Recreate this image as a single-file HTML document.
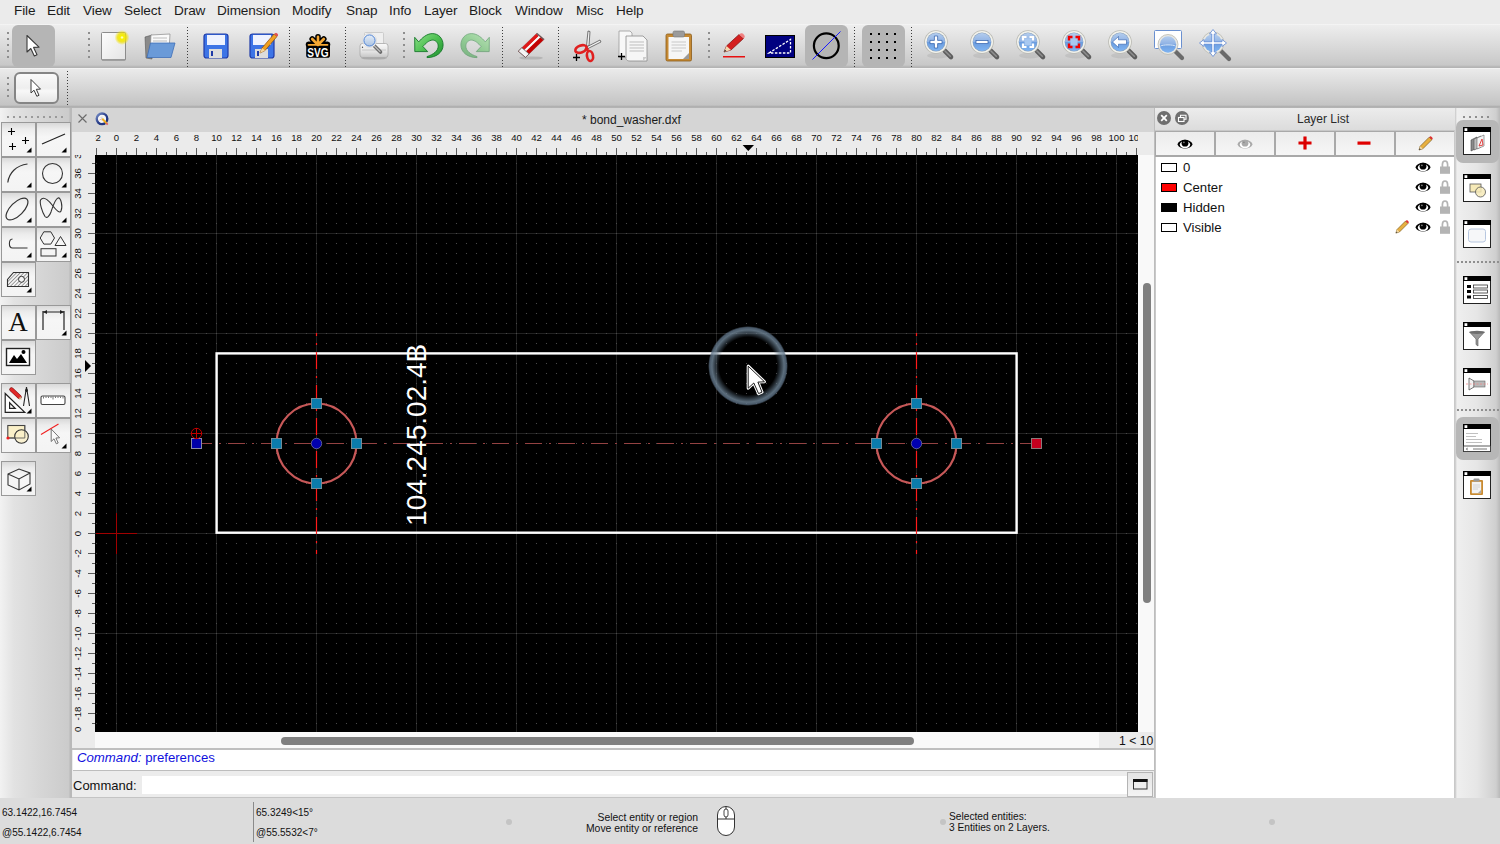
<!DOCTYPE html><html><head><meta charset="utf-8"><style>
*{margin:0;padding:0;box-sizing:border-box}
html,body{width:1500px;height:844px;overflow:hidden;background:#ececec;font-family:"Liberation Sans",sans-serif;color:#1a1a1a}
.ab{position:absolute}
.menu{position:absolute;top:0;left:0;width:1500px;height:24px;background:#ebebeb}
.menu span{position:absolute;top:3px;font-size:13.6px;letter-spacing:-0.1px;color:#1c1c1c;white-space:nowrap}
.tb1{position:absolute;top:24px;left:0;width:1500px;height:44px;background:linear-gradient(#f7f7f7 0px,#ededed 1.5px,#dcdcdc 20px,#c8c8c8 41px,#b4b4b4 43px,#b4b4b4 44px)}
.tb2{position:absolute;top:68px;left:0;width:1500px;height:40px;background:linear-gradient(#f7f7f7 0px,#eaeaea 1.5px,#d8d8d8 18px,#c4c4c4 37px,#b0b0b0 38.5px,#b4b4b4 40px)}
.sepv{position:absolute;width:2px;border-left:2px dotted #8a8a8a}
.ico{position:absolute}
</style></head><body>

<div class="menu">
<span style="left:14px">File</span>
<span style="left:47px">Edit</span>
<span style="left:83px">View</span>
<span style="left:124px">Select</span>
<span style="left:174px">Draw</span>
<span style="left:217px">Dimension</span>
<span style="left:292px">Modify</span>
<span style="left:346px">Snap</span>
<span style="left:389px">Info</span>
<span style="left:424px">Layer</span>
<span style="left:469px">Block</span>
<span style="left:515px">Window</span>
<span style="left:576px">Misc</span>
<span style="left:616px">Help</span>
</div>
<div class="tb1"></div><div class="tb2"></div>
<div class="ab" style="left:7px;top:32px;width:2px;height:2px;background:#8e8e8e"></div><div class="ab" style="left:7px;top:38px;width:2px;height:2px;background:#8e8e8e"></div><div class="ab" style="left:7px;top:44px;width:2px;height:2px;background:#8e8e8e"></div><div class="ab" style="left:7px;top:50px;width:2px;height:2px;background:#8e8e8e"></div><div class="ab" style="left:7px;top:56px;width:2px;height:2px;background:#8e8e8e"></div>
<div class="ab" style="left:88px;top:32px;width:2px;height:2px;background:#8e8e8e"></div><div class="ab" style="left:88px;top:38px;width:2px;height:2px;background:#8e8e8e"></div><div class="ab" style="left:88px;top:44px;width:2px;height:2px;background:#8e8e8e"></div><div class="ab" style="left:88px;top:50px;width:2px;height:2px;background:#8e8e8e"></div><div class="ab" style="left:88px;top:56px;width:2px;height:2px;background:#8e8e8e"></div>
<div class="ab" style="left:403px;top:32px;width:2px;height:2px;background:#8e8e8e"></div><div class="ab" style="left:403px;top:38px;width:2px;height:2px;background:#8e8e8e"></div><div class="ab" style="left:403px;top:44px;width:2px;height:2px;background:#8e8e8e"></div><div class="ab" style="left:403px;top:50px;width:2px;height:2px;background:#8e8e8e"></div><div class="ab" style="left:403px;top:56px;width:2px;height:2px;background:#8e8e8e"></div>
<div class="ab" style="left:708px;top:32px;width:2px;height:2px;background:#8e8e8e"></div><div class="ab" style="left:708px;top:38px;width:2px;height:2px;background:#8e8e8e"></div><div class="ab" style="left:708px;top:44px;width:2px;height:2px;background:#8e8e8e"></div><div class="ab" style="left:708px;top:50px;width:2px;height:2px;background:#8e8e8e"></div><div class="ab" style="left:708px;top:56px;width:2px;height:2px;background:#8e8e8e"></div>
<div class="ab" style="left:7px;top:77px;width:2px;height:2px;background:#8e8e8e"></div><div class="ab" style="left:7px;top:83px;width:2px;height:2px;background:#8e8e8e"></div><div class="ab" style="left:7px;top:89px;width:2px;height:2px;background:#8e8e8e"></div><div class="ab" style="left:7px;top:95px;width:2px;height:2px;background:#8e8e8e"></div>
<div class="ab" style="left:187px;top:27px;width:1px;height:1px;background:#3c3c3c"></div><div class="ab" style="left:187px;top:30px;width:1px;height:1px;background:#3c3c3c"></div><div class="ab" style="left:187px;top:33px;width:1px;height:1px;background:#3c3c3c"></div><div class="ab" style="left:187px;top:36px;width:1px;height:1px;background:#3c3c3c"></div><div class="ab" style="left:187px;top:39px;width:1px;height:1px;background:#3c3c3c"></div><div class="ab" style="left:187px;top:42px;width:1px;height:1px;background:#3c3c3c"></div><div class="ab" style="left:187px;top:45px;width:1px;height:1px;background:#3c3c3c"></div><div class="ab" style="left:187px;top:48px;width:1px;height:1px;background:#3c3c3c"></div><div class="ab" style="left:187px;top:51px;width:1px;height:1px;background:#3c3c3c"></div><div class="ab" style="left:187px;top:54px;width:1px;height:1px;background:#3c3c3c"></div><div class="ab" style="left:187px;top:57px;width:1px;height:1px;background:#3c3c3c"></div><div class="ab" style="left:187px;top:60px;width:1px;height:1px;background:#3c3c3c"></div><div class="ab" style="left:187px;top:63px;width:1px;height:1px;background:#3c3c3c"></div><div class="ab" style="left:187px;top:66px;width:1px;height:1px;background:#3c3c3c"></div>
<div class="ab" style="left:289px;top:27px;width:1px;height:1px;background:#3c3c3c"></div><div class="ab" style="left:289px;top:30px;width:1px;height:1px;background:#3c3c3c"></div><div class="ab" style="left:289px;top:33px;width:1px;height:1px;background:#3c3c3c"></div><div class="ab" style="left:289px;top:36px;width:1px;height:1px;background:#3c3c3c"></div><div class="ab" style="left:289px;top:39px;width:1px;height:1px;background:#3c3c3c"></div><div class="ab" style="left:289px;top:42px;width:1px;height:1px;background:#3c3c3c"></div><div class="ab" style="left:289px;top:45px;width:1px;height:1px;background:#3c3c3c"></div><div class="ab" style="left:289px;top:48px;width:1px;height:1px;background:#3c3c3c"></div><div class="ab" style="left:289px;top:51px;width:1px;height:1px;background:#3c3c3c"></div><div class="ab" style="left:289px;top:54px;width:1px;height:1px;background:#3c3c3c"></div><div class="ab" style="left:289px;top:57px;width:1px;height:1px;background:#3c3c3c"></div><div class="ab" style="left:289px;top:60px;width:1px;height:1px;background:#3c3c3c"></div><div class="ab" style="left:289px;top:63px;width:1px;height:1px;background:#3c3c3c"></div><div class="ab" style="left:289px;top:66px;width:1px;height:1px;background:#3c3c3c"></div>
<div class="ab" style="left:345px;top:27px;width:1px;height:1px;background:#3c3c3c"></div><div class="ab" style="left:345px;top:30px;width:1px;height:1px;background:#3c3c3c"></div><div class="ab" style="left:345px;top:33px;width:1px;height:1px;background:#3c3c3c"></div><div class="ab" style="left:345px;top:36px;width:1px;height:1px;background:#3c3c3c"></div><div class="ab" style="left:345px;top:39px;width:1px;height:1px;background:#3c3c3c"></div><div class="ab" style="left:345px;top:42px;width:1px;height:1px;background:#3c3c3c"></div><div class="ab" style="left:345px;top:45px;width:1px;height:1px;background:#3c3c3c"></div><div class="ab" style="left:345px;top:48px;width:1px;height:1px;background:#3c3c3c"></div><div class="ab" style="left:345px;top:51px;width:1px;height:1px;background:#3c3c3c"></div><div class="ab" style="left:345px;top:54px;width:1px;height:1px;background:#3c3c3c"></div><div class="ab" style="left:345px;top:57px;width:1px;height:1px;background:#3c3c3c"></div><div class="ab" style="left:345px;top:60px;width:1px;height:1px;background:#3c3c3c"></div><div class="ab" style="left:345px;top:63px;width:1px;height:1px;background:#3c3c3c"></div><div class="ab" style="left:345px;top:66px;width:1px;height:1px;background:#3c3c3c"></div>
<div class="ab" style="left:502px;top:27px;width:1px;height:1px;background:#3c3c3c"></div><div class="ab" style="left:502px;top:30px;width:1px;height:1px;background:#3c3c3c"></div><div class="ab" style="left:502px;top:33px;width:1px;height:1px;background:#3c3c3c"></div><div class="ab" style="left:502px;top:36px;width:1px;height:1px;background:#3c3c3c"></div><div class="ab" style="left:502px;top:39px;width:1px;height:1px;background:#3c3c3c"></div><div class="ab" style="left:502px;top:42px;width:1px;height:1px;background:#3c3c3c"></div><div class="ab" style="left:502px;top:45px;width:1px;height:1px;background:#3c3c3c"></div><div class="ab" style="left:502px;top:48px;width:1px;height:1px;background:#3c3c3c"></div><div class="ab" style="left:502px;top:51px;width:1px;height:1px;background:#3c3c3c"></div><div class="ab" style="left:502px;top:54px;width:1px;height:1px;background:#3c3c3c"></div><div class="ab" style="left:502px;top:57px;width:1px;height:1px;background:#3c3c3c"></div><div class="ab" style="left:502px;top:60px;width:1px;height:1px;background:#3c3c3c"></div><div class="ab" style="left:502px;top:63px;width:1px;height:1px;background:#3c3c3c"></div><div class="ab" style="left:502px;top:66px;width:1px;height:1px;background:#3c3c3c"></div>
<div class="ab" style="left:558px;top:27px;width:1px;height:1px;background:#3c3c3c"></div><div class="ab" style="left:558px;top:30px;width:1px;height:1px;background:#3c3c3c"></div><div class="ab" style="left:558px;top:33px;width:1px;height:1px;background:#3c3c3c"></div><div class="ab" style="left:558px;top:36px;width:1px;height:1px;background:#3c3c3c"></div><div class="ab" style="left:558px;top:39px;width:1px;height:1px;background:#3c3c3c"></div><div class="ab" style="left:558px;top:42px;width:1px;height:1px;background:#3c3c3c"></div><div class="ab" style="left:558px;top:45px;width:1px;height:1px;background:#3c3c3c"></div><div class="ab" style="left:558px;top:48px;width:1px;height:1px;background:#3c3c3c"></div><div class="ab" style="left:558px;top:51px;width:1px;height:1px;background:#3c3c3c"></div><div class="ab" style="left:558px;top:54px;width:1px;height:1px;background:#3c3c3c"></div><div class="ab" style="left:558px;top:57px;width:1px;height:1px;background:#3c3c3c"></div><div class="ab" style="left:558px;top:60px;width:1px;height:1px;background:#3c3c3c"></div><div class="ab" style="left:558px;top:63px;width:1px;height:1px;background:#3c3c3c"></div><div class="ab" style="left:558px;top:66px;width:1px;height:1px;background:#3c3c3c"></div>
<div class="ab" style="left:854px;top:27px;width:1px;height:1px;background:#3c3c3c"></div><div class="ab" style="left:854px;top:30px;width:1px;height:1px;background:#3c3c3c"></div><div class="ab" style="left:854px;top:33px;width:1px;height:1px;background:#3c3c3c"></div><div class="ab" style="left:854px;top:36px;width:1px;height:1px;background:#3c3c3c"></div><div class="ab" style="left:854px;top:39px;width:1px;height:1px;background:#3c3c3c"></div><div class="ab" style="left:854px;top:42px;width:1px;height:1px;background:#3c3c3c"></div><div class="ab" style="left:854px;top:45px;width:1px;height:1px;background:#3c3c3c"></div><div class="ab" style="left:854px;top:48px;width:1px;height:1px;background:#3c3c3c"></div><div class="ab" style="left:854px;top:51px;width:1px;height:1px;background:#3c3c3c"></div><div class="ab" style="left:854px;top:54px;width:1px;height:1px;background:#3c3c3c"></div><div class="ab" style="left:854px;top:57px;width:1px;height:1px;background:#3c3c3c"></div><div class="ab" style="left:854px;top:60px;width:1px;height:1px;background:#3c3c3c"></div><div class="ab" style="left:854px;top:63px;width:1px;height:1px;background:#3c3c3c"></div><div class="ab" style="left:854px;top:66px;width:1px;height:1px;background:#3c3c3c"></div>
<div class="ab" style="left:911px;top:27px;width:1px;height:1px;background:#3c3c3c"></div><div class="ab" style="left:911px;top:30px;width:1px;height:1px;background:#3c3c3c"></div><div class="ab" style="left:911px;top:33px;width:1px;height:1px;background:#3c3c3c"></div><div class="ab" style="left:911px;top:36px;width:1px;height:1px;background:#3c3c3c"></div><div class="ab" style="left:911px;top:39px;width:1px;height:1px;background:#3c3c3c"></div><div class="ab" style="left:911px;top:42px;width:1px;height:1px;background:#3c3c3c"></div><div class="ab" style="left:911px;top:45px;width:1px;height:1px;background:#3c3c3c"></div><div class="ab" style="left:911px;top:48px;width:1px;height:1px;background:#3c3c3c"></div><div class="ab" style="left:911px;top:51px;width:1px;height:1px;background:#3c3c3c"></div><div class="ab" style="left:911px;top:54px;width:1px;height:1px;background:#3c3c3c"></div><div class="ab" style="left:911px;top:57px;width:1px;height:1px;background:#3c3c3c"></div><div class="ab" style="left:911px;top:60px;width:1px;height:1px;background:#3c3c3c"></div><div class="ab" style="left:911px;top:63px;width:1px;height:1px;background:#3c3c3c"></div><div class="ab" style="left:911px;top:66px;width:1px;height:1px;background:#3c3c3c"></div>
<div class="ab" style="left:67px;top:71px;width:1px;height:1px;background:#3c3c3c"></div><div class="ab" style="left:67px;top:74px;width:1px;height:1px;background:#3c3c3c"></div><div class="ab" style="left:67px;top:77px;width:1px;height:1px;background:#3c3c3c"></div><div class="ab" style="left:67px;top:80px;width:1px;height:1px;background:#3c3c3c"></div><div class="ab" style="left:67px;top:83px;width:1px;height:1px;background:#3c3c3c"></div><div class="ab" style="left:67px;top:86px;width:1px;height:1px;background:#3c3c3c"></div><div class="ab" style="left:67px;top:89px;width:1px;height:1px;background:#3c3c3c"></div><div class="ab" style="left:67px;top:92px;width:1px;height:1px;background:#3c3c3c"></div><div class="ab" style="left:67px;top:95px;width:1px;height:1px;background:#3c3c3c"></div><div class="ab" style="left:67px;top:98px;width:1px;height:1px;background:#3c3c3c"></div><div class="ab" style="left:67px;top:101px;width:1px;height:1px;background:#3c3c3c"></div><div class="ab" style="left:67px;top:104px;width:1px;height:1px;background:#3c3c3c"></div>
<div class="ab" style="left:12px;top:25px;width:43px;height:42px;border-radius:6px;background:#b5b5b5"></div>
<div class="ab" style="left:805px;top:25px;width:43px;height:42px;border-radius:6px;background:#b5b5b5"></div>
<div class="ab" style="left:862px;top:25px;width:43px;height:42px;border-radius:6px;background:#b5b5b5"></div>
<div class="ab" style="left:14px;top:72px;width:45px;height:32px;border-radius:6px;border:2px solid #858585;background:linear-gradient(#fafafa,#eeeeee 50%,#f8f8f8 60%,#e6e6e6)"></div>
<svg class="ab" style="left:20px;top:30px" width="24" height="32" viewBox="0 0 24 32"><path d="M7 5.5 L7 22 L10.8 18.5 L14.3 26 L17 24.8 L13.6 17.4 L19 17.2 Z" fill="#fff" stroke="#3a3a3a" stroke-width="1.1" stroke-linejoin="round"/></svg>
<svg class="ab" style="left:24px;top:74px" width="20" height="28" viewBox="0 0 20 28"><path d="M7 5.5 L7 19 L10 16.2 L12.8 22.3 L15 21.3 L12.3 15.3 L16.5 15.1 Z" fill="#fff" stroke="#3a3a3a" stroke-width="1" stroke-linejoin="round"/></svg>
<svg class="ab" style="left:98px;top:29px" width="32" height="34" viewBox="0 0 32 34"><defs><linearGradient id="pg" x1="0" y1="0" x2="1" y2="1"><stop offset="0" stop-color="#fdfdfd"/><stop offset="1" stop-color="#e4e4e4"/></linearGradient><radialGradient id="glow"><stop offset="0" stop-color="#fff"/><stop offset="0.25" stop-color="#f6f000"/><stop offset="0.6" stop-color="#f0e000" stop-opacity="0.8"/><stop offset="1" stop-color="#f0e000" stop-opacity="0"/></radialGradient></defs><rect x="3.5" y="3.5" width="24" height="27.5" rx="1" fill="url(#pg)" stroke="#8c8c8c" stroke-width="1"/><rect x="4" y="30" width="23.5" height="1.5" fill="#777" opacity="0.5"/><circle cx="24" cy="8.5" r="7.5" fill="url(#glow)"/></svg>
<svg class="ab" style="left:142px;top:29px" width="36" height="34" viewBox="0 0 36 34"><path d="M3 8 L10 6 L10 30 L4 29Z" fill="#8a8a8a" stroke="#555" stroke-width="0.6"/><path d="M9 6 L28 5 L27 22 L8 24Z" fill="#fafafa" stroke="#888" stroke-width="0.7"/><path d="M11 9 H25 M11 12 H25" stroke="#bbb" stroke-width="1.2"/><path d="M5 28.5 L8.5 14 L33 14 L29 28.5Z" fill="#6a9ad8" stroke="#3f6fb8" stroke-width="0.8"/></svg>
<svg class="ab" style="left:203px;top:33px" width="26" height="26" viewBox="0 0 26 26"><rect x="1" y="1" width="24" height="24" rx="2.5" fill="#3d74e6" stroke="#1e3aa8" stroke-width="1.2"/><rect x="4" y="2" width="18" height="10" fill="#eef2ff"/><rect x="6" y="16" width="13" height="9" fill="#dcdcdc"/><rect x="8" y="18" width="2" height="5" fill="#1e3aa8"/></svg>
<svg class="ab" style="left:249px;top:30px" width="30" height="30" viewBox="0 0 30 30"><g transform="translate(0 3)"><rect x="1" y="1" width="24" height="24" rx="2.5" fill="#3d74e6" stroke="#1e3aa8" stroke-width="1.2"/><rect x="4" y="2" width="18" height="10" fill="#eef2ff"/><rect x="6" y="16" width="13" height="9" fill="#dcdcdc"/><rect x="8" y="18" width="2" height="5" fill="#1e3aa8"/></g><path d="M11 23 L13 18 L25 4 L28 6.5 L16 20.5Z" fill="#f0a020" stroke="#8a4a10" stroke-width="0.7"/><path d="M25 4 L28 6.5 L29 5.3 C29.5 4.5 28 3 27 2.7Z" fill="#e05050"/><path d="M11 23 L13 18 L16 20.5Z" fill="#f4d8a0"/></svg>
<svg class="ab" style="left:302px;top:30px" width="32" height="32" viewBox="0 0 32 32"><g stroke-linecap="round"><path d="M16 15 L16 6.8 M16 15 L10.2 9 M16 15 L21.8 9 M16 15 L6.5 14.2 M16 15 L25.5 14.2" stroke="#000" stroke-width="5.6"/></g><rect x="4.2" y="12.5" width="23.8" height="15.3" rx="2.6" fill="#000"/><g stroke-linecap="round"><path d="M16 15 L16 6.8 M16 15 L10.2 9 M16 15 L21.8 9" stroke="#f6a833" stroke-width="2.6"/><path d="M6.5 14.8 H25.5" stroke="#f6a833" stroke-width="1.8"/></g><text transform="translate(16 26.6) scale(0.8 1)" font-size="12.6" font-weight="bold" fill="#fff" text-anchor="middle" font-family="Liberation Sans">SVG</text></svg>
<svg class="ab" style="left:358px;top:30px" width="32" height="32" viewBox="0 0 32 32"><defs><linearGradient id="pr" x1="0" y1="0" x2="0" y2="1"><stop offset="0" stop-color="#fafafa"/><stop offset="0.6" stop-color="#e2e2e2"/><stop offset="1" stop-color="#c4c4c4"/></linearGradient><linearGradient id="lensg" x1="0" y1="0" x2="0" y2="1"><stop offset="0" stop-color="#e6eef8"/><stop offset="1" stop-color="#a9c2e2"/></linearGradient></defs><ellipse cx="16" cy="28" rx="13" ry="1.6" fill="#666" opacity="0.35"/><rect x="6.5" y="2.5" width="19" height="13" rx="1" fill="#efefef" stroke="#c4c4c4" stroke-width="0.8"/><rect x="2" y="13.5" width="28" height="14" rx="2.5" fill="url(#pr)" stroke="#a8a8a8" stroke-width="0.8"/><path d="M4 20 H28" stroke="#bdbdbd" stroke-width="0.8"/><circle cx="4.5" cy="17.3" r="0.7" fill="#444"/><path d="M16 15.5 L22.5 22" stroke="#6a6a6a" stroke-width="3.6" stroke-linecap="round"/><path d="M16.5 16 L22 21.5" stroke="#bdbdbd" stroke-width="1.2" stroke-linecap="round"/><circle cx="11.5" cy="10.5" r="7" fill="#fafafa" stroke="#cfcfcf" stroke-width="0.6"/><circle cx="11.5" cy="10.5" r="5.6" fill="url(#lensg)" stroke="#4a7ed0" stroke-width="1"/></svg>
<svg class="ab" style="left:410px;top:28px" width="38" height="34" viewBox="0 0 38 34"><defs><linearGradient id="gr" x1="0" y1="0" x2="1" y2="1"><stop offset="0" stop-color="#8ee08a"/><stop offset="0.5" stop-color="#4cbf50"/><stop offset="1" stop-color="#1f9030"/></linearGradient></defs><path d="M4.7 9.3 L8.7 13.9 C12 10 16.5 5.8 22.2 5.6 C28.5 5.4 33.1 10.5 33.1 16.9 C33.1 24.5 26 29.6 17 29.6 L17 28.6 C23.5 26.5 28.2 23 28.2 18.1 C28.2 14.5 25.5 12.1 22.6 12.1 C19 12.1 15.5 15.5 12.9 18.5 L17.7 23.6 L4.8 23.6 Z" fill="url(#gr)" stroke="#16782a" stroke-width="0.9" stroke-linejoin="round"/></svg>
<svg class="ab" style="left:456px;top:28px" width="38" height="34" viewBox="0 0 38 34"><g transform="translate(38 0) scale(-1 1)" opacity="0.5"><path d="M4.7 9.3 L8.7 13.9 C12 10 16.5 5.8 22.2 5.6 C28.5 5.4 33.1 10.5 33.1 16.9 C33.1 24.5 26 29.6 17 29.6 L17 28.6 C23.5 26.5 28.2 23 28.2 18.1 C28.2 14.5 25.5 12.1 22.6 12.1 C19 12.1 15.5 15.5 12.9 18.5 L17.7 23.6 L4.8 23.6 Z" fill="url(#gr)" stroke="#16782a" stroke-width="0.9" stroke-linejoin="round"/></g></svg>
<svg class="ab" style="left:512px;top:28px" width="38" height="34" viewBox="0 0 38 34"><ellipse cx="19" cy="30" rx="12" ry="1.6" fill="#777" opacity="0.3"/><path d="M9.77 19.74 L24.25 5.73 L26.88 7.96 L12.40 21.97Z" fill="#e01818"/><path d="M12.40 21.97 L26.88 7.96 L28.48 9.32 L14.01 23.34Z" fill="#fafafa"/><path d="M14.01 23.34 L28.48 9.32 L31.55 11.93 L17.07 25.94Z" fill="#c40000"/><path d="M24.25 5.73 L25.00 5.00 L32.30 11.20 L31.55 11.93Z" fill="#555"/><path d="M6.20 23.20 L9.77 19.74 L17.07 25.94 L13.50 29.40Z" fill="#f4f4f4" stroke="#555" stroke-width="0.7"/><path d="M6.20 23.20 L25.00 5.00 L32.30 11.20 L13.50 29.40Z" fill="none" stroke="#7a1a1a" stroke-width="0.5" opacity="0.6"/></svg>
<svg class="ab" style="left:571px;top:29px" width="32" height="34" viewBox="0 0 32 34"><path d="M15.5 17 L17 2 L19 2.5 L18 17Z" fill="#f2f2f2" stroke="#555" stroke-width="0.8"/><path d="M15.5 18 L29 11 L30 13 L17 19.5Z" fill="#f2f2f2" stroke="#555" stroke-width="0.8"/><ellipse cx="10" cy="20" rx="6" ry="3.5" transform="rotate(-20 10 20)" fill="none" stroke="#e02020" stroke-width="2.6"/><ellipse cx="19" cy="27" rx="3" ry="5" transform="rotate(-10 19 27)" fill="none" stroke="#e02020" stroke-width="2.6"/><path d="M14 19 L17.5 21" stroke="#e02020" stroke-width="2.6"/><path d="M5.5 25 V32 M2 28.5 H9" stroke="#000" stroke-width="1.3"/></svg>
<svg class="ab" style="left:616px;top:29px" width="34" height="34" viewBox="0 0 34 34"><path d="M3 2 L14 2 L16 4 L16 28 L3 28Z" fill="#f8f8f8" stroke="#999" stroke-width="0.8"/><path d="M10 7 L27 7 L31 11 L31 32 L14 32 C10.5 32 10 30 10 29Z" fill="#f6f6f6" stroke="#8a8a8a" stroke-width="0.8"/><path d="M13.5 13 H28 M13.5 16 H28 M13.5 19 H28 M13.5 22 H28" stroke="#bdbdbd" stroke-width="1"/><path d="M27 32 L31 28 L27 28Z" fill="#ccc"/><path d="M5.5 24 V31 M2 27.5 H9" stroke="#000" stroke-width="1.3"/></svg>
<svg class="ab" style="left:664px;top:29px" width="30" height="34" viewBox="0 0 30 34"><rect x="2" y="5" width="25.5" height="27" rx="1.5" fill="#c68a34" stroke="#8a5a18" stroke-width="0.8"/><rect x="4.5" y="8" width="20.5" height="22" fill="#f6f6f6"/><rect x="9" y="2" width="11.5" height="6" rx="1.5" fill="#9b9b9b" stroke="#777" stroke-width="0.6"/><path d="M7.5 13 H22 M7.5 16 H22 M7.5 19 H22 M7.5 22 H18" stroke="#c8c8c8" stroke-width="1"/><path d="M19 30 L25 24 L25 30Z" fill="#9a9a9a"/></svg>
<svg class="ab" style="left:721px;top:32px" width="26" height="28" viewBox="0 0 26 28"><path d="M3 20 L5.5 14 L18 2.5 L22.5 6.5 L10 18Z" fill="#d42020" stroke="#7a1010" stroke-width="0.7"/><path d="M18 2.5 L22.5 6.5 L23.5 5.5 C24.5 4.5 22.5 1.5 21 1.3 C20.2 1.2 19.3 1.5 18 2.5Z" fill="#f08080"/><path d="M3 20 L5.5 14 L10 18Z" fill="#f4d8b0"/><path d="M3 20 L4 17.8 L5.3 19Z" fill="#222"/><rect x="2" y="24" width="22" height="1.5" fill="#e81010"/></svg>
<svg class="ab" style="left:765px;top:35px" width="30" height="23" viewBox="0 0 30 23"><rect x="0.5" y="0.5" width="29" height="22" fill="#000080" stroke="#000" stroke-width="1"/><path d="M4 18 L25.5 4.5 L25.5 18 Z" fill="none" stroke="#fff" stroke-width="1.3" stroke-dasharray="2.5 1.5"/></svg>
<svg class="ab" style="left:812px;top:31px" width="30" height="30" viewBox="0 0 30 30"><circle cx="14.3" cy="14.7" r="12.4" fill="none" stroke="#000" stroke-width="2.2"/><path d="M0.5 28.5 L28.5 0.5" stroke="#1a1aff" stroke-width="1"/></svg>
<svg class="ab" style="left:870px;top:33px" width="26" height="26" viewBox="0 0 26 26"><rect x="0" y="0" width="2" height="2" fill="#000"/><rect x="0" y="8" width="2" height="2" fill="#000"/><rect x="0" y="16" width="2" height="2" fill="#000"/><rect x="0" y="24" width="2" height="2" fill="#000"/><rect x="8" y="0" width="2" height="2" fill="#000"/><rect x="8" y="8" width="2" height="2" fill="#000"/><rect x="8" y="16" width="2" height="2" fill="#000"/><rect x="8" y="24" width="2" height="2" fill="#000"/><rect x="16" y="0" width="2" height="2" fill="#000"/><rect x="16" y="8" width="2" height="2" fill="#000"/><rect x="16" y="16" width="2" height="2" fill="#000"/><rect x="16" y="24" width="2" height="2" fill="#000"/><rect x="24" y="0" width="2" height="2" fill="#000"/><rect x="24" y="8" width="2" height="2" fill="#000"/><rect x="24" y="16" width="2" height="2" fill="#000"/><rect x="24" y="24" width="2" height="2" fill="#000"/></svg>
<svg class="ab" style="left:923px;top:29px" width="32" height="32" viewBox="0 0 32 32"><defs><linearGradient id="mg" x1="0" y1="0" x2="0" y2="1"><stop offset="0" stop-color="#b4cdee"/><stop offset="0.48" stop-color="#8fb2e4"/><stop offset="0.52" stop-color="#6c9ddf"/><stop offset="1" stop-color="#7fb4f2"/></linearGradient></defs><ellipse cx="15" cy="26.5" rx="11" ry="3" fill="#000" opacity="0.07"/><path d="M21.5 21.5 L28 28" stroke="#5e5e5e" stroke-width="4.6" stroke-linecap="round"/><path d="M22 22 L27.3 27.3" stroke="#8e8e8e" stroke-width="1.6" stroke-linecap="round"/><circle cx="13" cy="13" r="11.8" fill="#b9b9b2"/><circle cx="13" cy="13" r="11" fill="#f2f2ec"/><circle cx="13" cy="13" r="9.4" fill="#8aa0b8"/><circle cx="13" cy="13" r="9" fill="url(#mg)"/><path d="M11.4 7 H14.6 V11.4 H19 V14.6 H14.6 V19 H11.4 V14.6 H7 V11.4 H11.4Z" fill="#fff" stroke="#2a5aa8" stroke-width="0.7"/></svg>
<svg class="ab" style="left:969px;top:29px" width="32" height="32" viewBox="0 0 32 32"><defs><linearGradient id="mg" x1="0" y1="0" x2="0" y2="1"><stop offset="0" stop-color="#b4cdee"/><stop offset="0.48" stop-color="#8fb2e4"/><stop offset="0.52" stop-color="#6c9ddf"/><stop offset="1" stop-color="#7fb4f2"/></linearGradient></defs><ellipse cx="15" cy="26.5" rx="11" ry="3" fill="#000" opacity="0.07"/><path d="M21.5 21.5 L28 28" stroke="#5e5e5e" stroke-width="4.6" stroke-linecap="round"/><path d="M22 22 L27.3 27.3" stroke="#8e8e8e" stroke-width="1.6" stroke-linecap="round"/><circle cx="13" cy="13" r="11.8" fill="#b9b9b2"/><circle cx="13" cy="13" r="11" fill="#f2f2ec"/><circle cx="13" cy="13" r="9.4" fill="#8aa0b8"/><circle cx="13" cy="13" r="9" fill="url(#mg)"/><rect x="7" y="11.4" width="12" height="3.2" fill="#fff" stroke="#2a5aa8" stroke-width="0.7"/></svg>
<svg class="ab" style="left:1015px;top:29px" width="32" height="32" viewBox="0 0 32 32"><defs><linearGradient id="mg" x1="0" y1="0" x2="0" y2="1"><stop offset="0" stop-color="#b4cdee"/><stop offset="0.48" stop-color="#8fb2e4"/><stop offset="0.52" stop-color="#6c9ddf"/><stop offset="1" stop-color="#7fb4f2"/></linearGradient></defs><ellipse cx="15" cy="26.5" rx="11" ry="3" fill="#000" opacity="0.07"/><path d="M21.5 21.5 L28 28" stroke="#5e5e5e" stroke-width="4.6" stroke-linecap="round"/><path d="M22 22 L27.3 27.3" stroke="#8e8e8e" stroke-width="1.6" stroke-linecap="round"/><circle cx="13" cy="13" r="11.8" fill="#b9b9b2"/><circle cx="13" cy="13" r="11" fill="#f2f2ec"/><circle cx="13" cy="13" r="9.4" fill="#8aa0b8"/><circle cx="13" cy="13" r="9" fill="url(#mg)"/><rect x="9.5" y="9.5" width="7" height="7" fill="#a8c8f0"/><path d="M8 11.5 V8 H11.5 M14.5 8 H18 V11.5 M18 14.5 V18 H14.5 M11.5 18 H8 V14.5" fill="none" stroke="#fff" stroke-width="2.2"/></svg>
<svg class="ab" style="left:1061px;top:29px" width="32" height="32" viewBox="0 0 32 32"><defs><linearGradient id="mg" x1="0" y1="0" x2="0" y2="1"><stop offset="0" stop-color="#b4cdee"/><stop offset="0.48" stop-color="#8fb2e4"/><stop offset="0.52" stop-color="#6c9ddf"/><stop offset="1" stop-color="#7fb4f2"/></linearGradient></defs><ellipse cx="15" cy="26.5" rx="11" ry="3" fill="#000" opacity="0.07"/><path d="M21.5 21.5 L28 28" stroke="#5e5e5e" stroke-width="4.6" stroke-linecap="round"/><path d="M22 22 L27.3 27.3" stroke="#8e8e8e" stroke-width="1.6" stroke-linecap="round"/><circle cx="13" cy="13" r="11.8" fill="#b9b9b2"/><circle cx="13" cy="13" r="11" fill="#f2f2ec"/><circle cx="13" cy="13" r="9.4" fill="#8aa0b8"/><circle cx="13" cy="13" r="9" fill="url(#mg)"/><rect x="9.5" y="9.5" width="7" height="7" fill="#a8c8f0"/><path d="M8 11.5 V8 H11.5 M14.5 8 H18 V11.5 M18 14.5 V18 H14.5 M11.5 18 H8 V14.5" fill="none" stroke="#f00000" stroke-width="2.4"/></svg>
<svg class="ab" style="left:1107px;top:29px" width="32" height="32" viewBox="0 0 32 32"><defs><linearGradient id="mg" x1="0" y1="0" x2="0" y2="1"><stop offset="0" stop-color="#b4cdee"/><stop offset="0.48" stop-color="#8fb2e4"/><stop offset="0.52" stop-color="#6c9ddf"/><stop offset="1" stop-color="#7fb4f2"/></linearGradient></defs><ellipse cx="15" cy="26.5" rx="11" ry="3" fill="#000" opacity="0.07"/><path d="M21.5 21.5 L28 28" stroke="#5e5e5e" stroke-width="4.6" stroke-linecap="round"/><path d="M22 22 L27.3 27.3" stroke="#8e8e8e" stroke-width="1.6" stroke-linecap="round"/><circle cx="13" cy="13" r="11.8" fill="#b9b9b2"/><circle cx="13" cy="13" r="11" fill="#f2f2ec"/><circle cx="13" cy="13" r="9.4" fill="#8aa0b8"/><circle cx="13" cy="13" r="9" fill="url(#mg)"/><path d="M5.5 13 L11.5 7.5 L11.5 10.8 L19.5 10.8 L19.5 15.2 L11.5 15.2 L11.5 18.5 Z" fill="#fff" stroke="#2a5aa8" stroke-width="0.6"/></svg>
<svg class="ab" style="left:1153px;top:29px" width="34" height="34" viewBox="0 0 34 34"><defs><linearGradient id="mg" x1="0" y1="0" x2="0" y2="1"><stop offset="0" stop-color="#b4cdee"/><stop offset="0.48" stop-color="#8fb2e4"/><stop offset="0.52" stop-color="#6c9ddf"/><stop offset="1" stop-color="#7fb4f2"/></linearGradient></defs><rect x="1.5" y="1.5" width="27" height="18" rx="1" fill="#fff" stroke="#6a90d0" stroke-width="1"/><path d="M22 22 L29 29" stroke="#6a6a6a" stroke-width="4.2" stroke-linecap="round"/><circle cx="15" cy="15.5" r="10" fill="#e8e8e4" stroke="#b9b9b0" stroke-width="0.8"/><circle cx="15" cy="15.5" r="8.2" fill="url(#mg)"/><path d="M7.5 17 C10 15.5 20 15.5 22.5 17" stroke="#dbe8f8" stroke-width="1" fill="none"/></svg>
<svg class="ab" style="left:1198px;top:28px" width="36" height="36" viewBox="0 0 36 36"><defs><linearGradient id="mg" x1="0" y1="0" x2="0" y2="1"><stop offset="0" stop-color="#b4cdee"/><stop offset="0.48" stop-color="#8fb2e4"/><stop offset="0.52" stop-color="#6c9ddf"/><stop offset="1" stop-color="#7fb4f2"/></linearGradient></defs><path d="M23 23 L31 31" stroke="#6a6a6a" stroke-width="4.2" stroke-linecap="round"/><circle cx="15" cy="15" r="11" fill="#e8e8e4" stroke="#b9b9b0" stroke-width="0.8"/><circle cx="15" cy="15" r="9" fill="url(#mg)"/><path d="M15 1.5 L18.5 6 H16.2 V13.8 H24 V11.5 L28.5 15 L24 18.5 V16.2 H16.2 V24 H18.5 L15 28.5 L11.5 24 H13.8 V16.2 H6 V18.5 L1.5 15 L6 11.5 V13.8 H13.8 V6 H11.5Z" fill="#fff" stroke="#4a7ad0" stroke-width="0.7"/></svg>
<div class="ab" style="left:0;top:108px;width:72px;height:690px;background:linear-gradient(90deg,#f2f2f2 0px,#e2e2e2 14px,#d6d6d6 40px,#cbcbcb 69px,#b9b9b9 70px,#b9b9b9 72px)"></div>
<div class="ab" style="left:7px;top:116px;width:2px;height:2px;background:#9a9a9a"></div>
<div class="ab" style="left:13px;top:116px;width:2px;height:2px;background:#9a9a9a"></div>
<div class="ab" style="left:19px;top:116px;width:2px;height:2px;background:#9a9a9a"></div>
<div class="ab" style="left:25px;top:116px;width:2px;height:2px;background:#9a9a9a"></div>
<div class="ab" style="left:31px;top:116px;width:2px;height:2px;background:#9a9a9a"></div>
<div class="ab" style="left:37px;top:116px;width:2px;height:2px;background:#9a9a9a"></div>
<div class="ab" style="left:43px;top:116px;width:2px;height:2px;background:#9a9a9a"></div>
<div class="ab" style="left:49px;top:116px;width:2px;height:2px;background:#9a9a9a"></div>
<div class="ab" style="left:55px;top:116px;width:2px;height:2px;background:#9a9a9a"></div>
<div class="ab" style="left:61px;top:116px;width:2px;height:2px;background:#9a9a9a"></div>
<div class="ab" style="left:1px;top:122px;width:35px;height:35px;border:1px solid #999;background:linear-gradient(#d9d9d9 0px,#ececec 6px,#f6f6f6 14px,#f3f3f3 36px)"></div>
<svg class="ab" style="left:1px;top:122px" width="34" height="34" viewBox="0 0 34 34"><path d="M10.5 6 V13 M7 9.5 H14 M24.5 15 V22 M21 18.5 H28 M11.5 21 V28 M8 24.5 H15" stroke="#000" stroke-width="1.1"/><path d="M25.5 30.5 L30.5 25.5 L30.5 30.5Z" fill="#000"/></svg>
<div class="ab" style="left:36px;top:122px;width:35px;height:35px;border:1px solid #999;background:linear-gradient(#d9d9d9 0px,#ececec 6px,#f6f6f6 14px,#f3f3f3 36px)"></div>
<svg class="ab" style="left:36px;top:122px" width="34" height="34" viewBox="0 0 34 34"><path d="M6 22 L29 12" stroke="#222" stroke-width="1.2"/><path d="M25.5 30.5 L30.5 25.5 L30.5 30.5Z" fill="#000"/></svg>
<div class="ab" style="left:1px;top:157px;width:35px;height:35px;border:1px solid #999;background:linear-gradient(#d9d9d9 0px,#ececec 6px,#f6f6f6 14px,#f3f3f3 36px)"></div>
<svg class="ab" style="left:1px;top:157px" width="34" height="34" viewBox="0 0 34 34"><path d="M6.8 25.5 C8 16 15 8.5 26.5 7" fill="none" stroke="#333" stroke-width="1.2"/><path d="M25.5 30.5 L30.5 25.5 L30.5 30.5Z" fill="#000"/></svg>
<div class="ab" style="left:36px;top:157px;width:35px;height:35px;border:1px solid #999;background:linear-gradient(#d9d9d9 0px,#ececec 6px,#f6f6f6 14px,#f3f3f3 36px)"></div>
<svg class="ab" style="left:36px;top:157px" width="34" height="34" viewBox="0 0 34 34"><circle cx="16.5" cy="16.5" r="10" fill="none" stroke="#333" stroke-width="1.1"/><path d="M25.5 30.5 L30.5 25.5 L30.5 30.5Z" fill="#000"/></svg>
<div class="ab" style="left:1px;top:192px;width:35px;height:35px;border:1px solid #999;background:linear-gradient(#d9d9d9 0px,#ececec 6px,#f6f6f6 14px,#f3f3f3 36px)"></div>
<svg class="ab" style="left:1px;top:192px" width="34" height="34" viewBox="0 0 34 34"><ellipse cx="16" cy="17" rx="14" ry="6.5" transform="rotate(-45 16 17)" fill="none" stroke="#333" stroke-width="1.2"/><path d="M25.5 30.5 L30.5 25.5 L30.5 30.5Z" fill="#000"/></svg>
<div class="ab" style="left:36px;top:192px;width:35px;height:35px;border:1px solid #999;background:linear-gradient(#d9d9d9 0px,#ececec 6px,#f6f6f6 14px,#f3f3f3 36px)"></div>
<svg class="ab" style="left:36px;top:192px" width="34" height="34" viewBox="0 0 34 34"><path d="M4.5 8 C8 3 14 10 17 14 C20 18 24 22 25 19 C27 15 25 5 22 6 C19 7 17 14 15 20 C13.5 24 11 27 9 24.5 C6 20 3.5 11 4.5 8Z" fill="none" stroke="#333" stroke-width="1.1"/><path d="M25.5 30.5 L30.5 25.5 L30.5 30.5Z" fill="#000"/></svg>
<div class="ab" style="left:1px;top:227px;width:35px;height:35px;border:1px solid #999;background:linear-gradient(#d9d9d9 0px,#ececec 6px,#f6f6f6 14px,#f3f3f3 36px)"></div>
<svg class="ab" style="left:1px;top:227px" width="34" height="34" viewBox="0 0 34 34"><path d="M11.5 12 C7.5 12.3 7.2 20.5 11.5 21 L26.5 21" fill="none" stroke="#333" stroke-width="1.1"/><path d="M25.5 30.5 L30.5 25.5 L30.5 30.5Z" fill="#000"/></svg>
<div class="ab" style="left:36px;top:227px;width:35px;height:35px;border:1px solid #999;background:linear-gradient(#d9d9d9 0px,#ececec 6px,#f6f6f6 14px,#f3f3f3 36px)"></div>
<svg class="ab" style="left:36px;top:227px" width="34" height="34" viewBox="0 0 34 34"><path d="M7.8 4.8 L14.8 4.8 L18.5 11 L14.8 17.1 L7.8 17.1 L4.2 11Z M19 18.5 L24.5 9.5 L30 18.5Z" fill="none" stroke="#333" stroke-width="1"/><rect x="5" y="21.7" width="15" height="7.3" fill="none" stroke="#333" stroke-width="1"/><path d="M25.5 30.5 L30.5 25.5 L30.5 30.5Z" fill="#000"/></svg>
<div class="ab" style="left:1px;top:262px;width:35px;height:35px;border:1px solid #999;background:linear-gradient(#d9d9d9 0px,#ececec 6px,#f6f6f6 14px,#f3f3f3 36px)"></div>
<svg class="ab" style="left:1px;top:262px" width="34" height="34" viewBox="0 0 34 34"><defs><pattern id="ht" width="2.6" height="2.6" patternUnits="userSpaceOnUse" patternTransform="rotate(45)"><rect width="0.8" height="2.6" fill="#8a8a8a"/></pattern></defs><path d="M6.5 24.5 L6.5 17.5 L12.5 10.5 L27.5 10.5 L27.5 24.5Z" fill="url(#ht)" stroke="#333" stroke-width="1.1"/><circle cx="20.5" cy="17.3" r="3" fill="#f4f4f4" stroke="#333" stroke-width="1"/><path d="M25.5 30.5 L30.5 25.5 L30.5 30.5Z" fill="#000"/></svg>
<div class="ab" style="left:1px;top:305px;width:35px;height:35px;border:1px solid #999;background:linear-gradient(#d9d9d9 0px,#ececec 6px,#f6f6f6 14px,#f3f3f3 36px)"></div>
<svg class="ab" style="left:1px;top:305px" width="34" height="34" viewBox="0 0 34 34"><text x="17" y="26" font-family="Liberation Serif" font-size="27" text-anchor="middle" fill="#111">A</text></svg>
<div class="ab" style="left:36px;top:305px;width:35px;height:35px;border:1px solid #999;background:linear-gradient(#d9d9d9 0px,#ececec 6px,#f6f6f6 14px,#f3f3f3 36px)"></div>
<svg class="ab" style="left:36px;top:305px" width="34" height="34" viewBox="0 0 34 34"><path d="M7 6 V25 M28 6 V25 M7 7 H28" stroke="#222" stroke-width="1.2" fill="none"/><path d="M7 7 L11 5 L11 9Z M28 7 L24 5 L24 9Z" fill="#222"/><path d="M25.5 30.5 L30.5 25.5 L30.5 30.5Z" fill="#000"/></svg>
<div class="ab" style="left:1px;top:340px;width:35px;height:35px;border:1px solid #999;background:linear-gradient(#d9d9d9 0px,#ececec 6px,#f6f6f6 14px,#f3f3f3 36px)"></div>
<svg class="ab" style="left:1px;top:340px" width="34" height="34" viewBox="0 0 34 34"><rect x="5.5" y="8.5" width="23" height="17" fill="#fff" stroke="#222" stroke-width="1.4"/><path d="M8 23 L13 15 L16 19 L20 14 L26 23Z" fill="#000"/><circle cx="22.5" cy="12" r="2" fill="#000"/></svg>
<div class="ab" style="left:1px;top:383px;width:35px;height:35px;border:1px solid #999;background:linear-gradient(#d9d9d9 0px,#ececec 6px,#f6f6f6 14px,#f3f3f3 36px)"></div>
<svg class="ab" style="left:1px;top:383px" width="34" height="34" viewBox="0 0 34 34"><path d="M4.2 10.5 L4.2 29.4 L23.8 29.4Z M8.6 19.8 L8.6 25.4 L14.2 25.4Z" fill="#fff" stroke="#222" stroke-width="1.2" stroke-linejoin="miter"/><path d="M10.5 6.5 L18.5 14" stroke="#7a1010" stroke-width="4.4" stroke-linecap="round"/><path d="M10.5 6.5 L18.5 14" stroke="#e02828" stroke-width="3.2" stroke-linecap="round"/><path d="M17.5 15.5 L20.5 16.8 L19.6 13.6Z" fill="#d8b078"/><path d="M25.5 4 L22.5 23 M25.5 4 L28.5 23" stroke="#222" stroke-width="1.1" fill="none"/><circle cx="25.5" cy="7.5" r="1.4" fill="#222"/><path d="M25.5 30.5 L30.5 25.5 L30.5 30.5Z" fill="#000"/></svg>
<div class="ab" style="left:36px;top:383px;width:35px;height:35px;border:1px solid #999;background:linear-gradient(#d9d9d9 0px,#ececec 6px,#f6f6f6 14px,#f3f3f3 36px)"></div>
<svg class="ab" style="left:36px;top:383px" width="34" height="34" viewBox="0 0 34 34"><rect x="5" y="13" width="24" height="8.5" rx="1.5" fill="#fff" stroke="#444" stroke-width="1.1"/><path d="M7.5 13.5 V15.5 M10 13.5 V15 M12.5 13.5 V15 M15 13.5 V15 M17 13.5 V16.5 M19.5 13.5 V15 M22 13.5 V15 M24.5 13.5 V15 M27 13.5 V15.5" stroke="#555" stroke-width="0.8"/></svg>
<div class="ab" style="left:1px;top:418px;width:35px;height:35px;border:1px solid #999;background:linear-gradient(#d9d9d9 0px,#ececec 6px,#f6f6f6 14px,#f3f3f3 36px)"></div>
<svg class="ab" style="left:1px;top:418px" width="34" height="34" viewBox="0 0 34 34"><rect x="6.8" y="7.5" width="17" height="12.5" fill="#faf0c8" stroke="#444" stroke-width="1.1"/><circle cx="20.5" cy="18.5" r="6.8" fill="#faf0c8" fill-opacity="0.8" stroke="#333" stroke-width="1.1"/><path d="M6.8 20 H23.8 V7.5" fill="none" stroke="#555" stroke-width="1" opacity="0.7"/><circle cx="7" cy="20" r="1.6" fill="#f02020"/></svg>
<div class="ab" style="left:36px;top:418px;width:35px;height:35px;border:1px solid #999;background:linear-gradient(#d9d9d9 0px,#ececec 6px,#f6f6f6 14px,#f3f3f3 36px)"></div>
<svg class="ab" style="left:36px;top:418px" width="34" height="34" viewBox="0 0 34 34"><path d="M5 16.5 L22.5 6" stroke="#f02020" stroke-width="1.1"/><path d="M15.2 11 L15.2 23.5 L18 20.8 L20.3 25.8 L22.2 25 L19.9 20 L23.6 19.8Z" fill="#fafafa" stroke="#666" stroke-width="0.9"/><path d="M25.5 30.5 L30.5 25.5 L30.5 30.5Z" fill="#000"/></svg>
<div class="ab" style="left:1px;top:461px;width:35px;height:35px;border:1px solid #999;background:linear-gradient(#d9d9d9 0px,#ececec 6px,#f6f6f6 14px,#f3f3f3 36px)"></div>
<svg class="ab" style="left:1px;top:461px" width="34" height="34" viewBox="0 0 34 34"><path d="M7 13 L18 8 L29 12 L29 23 L18 29 L7 24Z M7 13 L18 18 L29 12 M18 18 L18 29" fill="none" stroke="#333" stroke-width="1.1"/><path d="M25.5 30.5 L30.5 25.5 L30.5 30.5Z" fill="#000"/></svg>
<div class="ab" style="left:72px;top:108px;width:1083px;height:24px;background:#d5d5d5"></div>
<div class="ab" style="left:72px;top:132px;width:1083px;height:23px;background:#ebebeb"></div>
<div class="ab" style="left:72px;top:155px;width:23px;height:593px;background:#ebebeb"></div>
<div class="ab" style="left:1138px;top:155px;width:17px;height:577px;background:#f9f9f9"></div>
<div class="ab" style="left:95px;top:732px;width:1060px;height:16px;background:#f9f9f9"></div>
<div class="ab" style="left:72px;top:748px;width:1083px;height:50px;background:#ececec"></div>
<svg class="ab" style="left:95px;top:155px" width="1043" height="577" viewBox="95 155 1043 577" shape-rendering="crispEdges">
<rect x="95" y="155" width="1043" height="577" fill="#000"/>
<rect x="116" y="155" width="1" height="577" fill="#222"/>
<rect x="216" y="155" width="1" height="577" fill="#222"/>
<rect x="316" y="155" width="1" height="577" fill="#222"/>
<rect x="416" y="155" width="1" height="577" fill="#222"/>
<rect x="516" y="155" width="1" height="577" fill="#222"/>
<rect x="616" y="155" width="1" height="577" fill="#222"/>
<rect x="716" y="155" width="1" height="577" fill="#222"/>
<rect x="816" y="155" width="1" height="577" fill="#222"/>
<rect x="916" y="155" width="1" height="577" fill="#222"/>
<rect x="1016" y="155" width="1" height="577" fill="#222"/>
<rect x="1116" y="155" width="1" height="577" fill="#222"/>
<rect x="95" y="233" width="1043" height="1" fill="#222"/>
<rect x="95" y="333" width="1043" height="1" fill="#222"/>
<rect x="95" y="433" width="1043" height="1" fill="#222"/>
<rect x="95" y="533" width="1043" height="1" fill="#222"/>
<rect x="95" y="633" width="1043" height="1" fill="#222"/>
<defs><pattern id="dots" x="6" y="3" width="10" height="10" patternUnits="userSpaceOnUse"><rect x="0" y="0" width="1" height="1" fill="#4a4a4a"/></pattern></defs>
<rect x="95" y="155" width="1043" height="577" fill="url(#dots)"/>
<rect x="216.6" y="353.4" width="800" height="179.3" fill="none" stroke="#fff" stroke-width="2.4" shape-rendering="auto"/>
<line x1="196" y1="443.5" x2="1037" y2="443.5" stroke="#944242" stroke-width="1" stroke-dasharray="17 7 2 7" stroke-dashoffset="1" shape-rendering="auto"/>
<line x1="316.5" y1="333" x2="316.5" y2="554" stroke="#ff1a1a" stroke-width="1.2" stroke-dasharray="17 7 2 7" stroke-dashoffset="14" shape-rendering="auto"/>
<circle cx="316.5" cy="443.5" r="40" fill="none" stroke="#c65858" stroke-width="2.2" shape-rendering="auto"/>
<rect x="311.5" y="398.5" width="10" height="10" fill="#0b7cac" stroke="#6f8c98" stroke-width="1" shape-rendering="auto"/>
<rect x="311.5" y="478.5" width="10" height="10" fill="#0b7cac" stroke="#6f8c98" stroke-width="1" shape-rendering="auto"/>
<rect x="271.5" y="438.5" width="10" height="10" fill="#0b7cac" stroke="#6f8c98" stroke-width="1" shape-rendering="auto"/>
<rect x="351.5" y="438.5" width="10" height="10" fill="#0b7cac" stroke="#6f8c98" stroke-width="1" shape-rendering="auto"/>
<circle cx="316.5" cy="443.5" r="5.2" fill="#0000b0" stroke="#7070a0" stroke-width="0.8" shape-rendering="auto"/>
<line x1="916.5" y1="333" x2="916.5" y2="554" stroke="#ff1a1a" stroke-width="1.2" stroke-dasharray="17 7 2 7" stroke-dashoffset="14" shape-rendering="auto"/>
<circle cx="916.5" cy="443.5" r="40" fill="none" stroke="#c65858" stroke-width="2.2" shape-rendering="auto"/>
<rect x="911.5" y="398.5" width="10" height="10" fill="#0b7cac" stroke="#6f8c98" stroke-width="1" shape-rendering="auto"/>
<rect x="911.5" y="478.5" width="10" height="10" fill="#0b7cac" stroke="#6f8c98" stroke-width="1" shape-rendering="auto"/>
<rect x="871.5" y="438.5" width="10" height="10" fill="#0b7cac" stroke="#6f8c98" stroke-width="1" shape-rendering="auto"/>
<rect x="951.5" y="438.5" width="10" height="10" fill="#0b7cac" stroke="#6f8c98" stroke-width="1" shape-rendering="auto"/>
<circle cx="916.5" cy="443.5" r="5.2" fill="#0000b0" stroke="#7070a0" stroke-width="0.8" shape-rendering="auto"/>
<rect x="191.5" y="438.5" width="10" height="10" fill="#0000a8" stroke="#8a8aa8" stroke-width="1"/>
<g shape-rendering="auto" stroke="#c00000" stroke-width="1" fill="none"><circle cx="196.5" cy="433.5" r="5.2"/><line x1="196.5" y1="428" x2="196.5" y2="439"/><line x1="191" y1="433.5" x2="202" y2="433.5"/></g>
<rect x="1031.5" y="438.5" width="10" height="10" fill="#c4001e" stroke="#8a7a7a" stroke-width="1"/>
<rect x="96" y="533" width="41" height="1" fill="#a00000"/><rect x="116" y="513" width="1" height="41" fill="#a00000"/>
<text transform="translate(426.3 525.9) rotate(-90)" font-size="28" fill="#fff" shape-rendering="auto">104.245.02.4B</text>
<defs><radialGradient id="ring" cx="0.5" cy="0.5" r="0.5"><stop offset="0.72" stop-color="#5a6e80" stop-opacity="0"/><stop offset="0.82" stop-color="#5f7486" stop-opacity="0.5"/><stop offset="0.9" stop-color="#73899b" stop-opacity="0.8"/><stop offset="0.96" stop-color="#5c7084" stop-opacity="0.8"/><stop offset="1" stop-color="#5c7084" stop-opacity="0"/></radialGradient></defs>
<circle cx="748" cy="366" r="40" fill="url(#ring)" shape-rendering="auto"/>
<g shape-rendering="auto" stroke-linejoin="round"><path d="M748.2 366.2 L748.2 388.2 L753.8 383 L758.6 393.6 L762 392.1 L757.9 382.1 L764.5 381.8 Z" fill="#fff" stroke="#fff" stroke-width="3"/><path d="M748.2 366.2 L748.2 388.2 L753.8 383 L758.6 393.6 L762 392.1 L757.9 382.1 L764.5 381.8 Z" fill="#fff" stroke="#000" stroke-width="0.9"/></g>
</svg>
<svg class="ab" style="left:72px;top:132px" width="1083" height="23" viewBox="72 132 1083 23"><defs><clipPath id="hc"><rect x="95" y="132" width="1043" height="23"/></clipPath><clipPath id="vc"><rect x="72" y="155" width="23" height="577"/></clipPath></defs>
<g clip-path="url(#hc)">
<text x="76.5" y="141" font-size="9.6" text-anchor="middle" fill="#111">-4</text>
<rect x="96" y="148" width="1" height="7" fill="#5c5c5c"/>
<text x="96.5" y="141" font-size="9.6" text-anchor="middle" fill="#111">-2</text>
<rect x="106" y="152" width="1" height="3" fill="#5c5c5c"/>
<rect x="116" y="148" width="1" height="7" fill="#5c5c5c"/>
<text x="116.5" y="141" font-size="9.6" text-anchor="middle" fill="#111">0</text>
<rect x="126" y="152" width="1" height="3" fill="#5c5c5c"/>
<rect x="136" y="148" width="1" height="7" fill="#5c5c5c"/>
<text x="136.5" y="141" font-size="9.6" text-anchor="middle" fill="#111">2</text>
<rect x="146" y="152" width="1" height="3" fill="#5c5c5c"/>
<rect x="156" y="148" width="1" height="7" fill="#5c5c5c"/>
<text x="156.5" y="141" font-size="9.6" text-anchor="middle" fill="#111">4</text>
<rect x="166" y="152" width="1" height="3" fill="#5c5c5c"/>
<rect x="176" y="148" width="1" height="7" fill="#5c5c5c"/>
<text x="176.5" y="141" font-size="9.6" text-anchor="middle" fill="#111">6</text>
<rect x="186" y="152" width="1" height="3" fill="#5c5c5c"/>
<rect x="196" y="148" width="1" height="7" fill="#5c5c5c"/>
<text x="196.5" y="141" font-size="9.6" text-anchor="middle" fill="#111">8</text>
<rect x="206" y="152" width="1" height="3" fill="#5c5c5c"/>
<rect x="216" y="148" width="1" height="7" fill="#5c5c5c"/>
<text x="216.5" y="141" font-size="9.6" text-anchor="middle" fill="#111">10</text>
<rect x="226" y="152" width="1" height="3" fill="#5c5c5c"/>
<rect x="236" y="148" width="1" height="7" fill="#5c5c5c"/>
<text x="236.5" y="141" font-size="9.6" text-anchor="middle" fill="#111">12</text>
<rect x="246" y="152" width="1" height="3" fill="#5c5c5c"/>
<rect x="256" y="148" width="1" height="7" fill="#5c5c5c"/>
<text x="256.5" y="141" font-size="9.6" text-anchor="middle" fill="#111">14</text>
<rect x="266" y="152" width="1" height="3" fill="#5c5c5c"/>
<rect x="276" y="148" width="1" height="7" fill="#5c5c5c"/>
<text x="276.5" y="141" font-size="9.6" text-anchor="middle" fill="#111">16</text>
<rect x="286" y="152" width="1" height="3" fill="#5c5c5c"/>
<rect x="296" y="148" width="1" height="7" fill="#5c5c5c"/>
<text x="296.5" y="141" font-size="9.6" text-anchor="middle" fill="#111">18</text>
<rect x="306" y="152" width="1" height="3" fill="#5c5c5c"/>
<rect x="316" y="148" width="1" height="7" fill="#5c5c5c"/>
<text x="316.5" y="141" font-size="9.6" text-anchor="middle" fill="#111">20</text>
<rect x="326" y="152" width="1" height="3" fill="#5c5c5c"/>
<rect x="336" y="148" width="1" height="7" fill="#5c5c5c"/>
<text x="336.5" y="141" font-size="9.6" text-anchor="middle" fill="#111">22</text>
<rect x="346" y="152" width="1" height="3" fill="#5c5c5c"/>
<rect x="356" y="148" width="1" height="7" fill="#5c5c5c"/>
<text x="356.5" y="141" font-size="9.6" text-anchor="middle" fill="#111">24</text>
<rect x="366" y="152" width="1" height="3" fill="#5c5c5c"/>
<rect x="376" y="148" width="1" height="7" fill="#5c5c5c"/>
<text x="376.5" y="141" font-size="9.6" text-anchor="middle" fill="#111">26</text>
<rect x="386" y="152" width="1" height="3" fill="#5c5c5c"/>
<rect x="396" y="148" width="1" height="7" fill="#5c5c5c"/>
<text x="396.5" y="141" font-size="9.6" text-anchor="middle" fill="#111">28</text>
<rect x="406" y="152" width="1" height="3" fill="#5c5c5c"/>
<rect x="416" y="148" width="1" height="7" fill="#5c5c5c"/>
<text x="416.5" y="141" font-size="9.6" text-anchor="middle" fill="#111">30</text>
<rect x="426" y="152" width="1" height="3" fill="#5c5c5c"/>
<rect x="436" y="148" width="1" height="7" fill="#5c5c5c"/>
<text x="436.5" y="141" font-size="9.6" text-anchor="middle" fill="#111">32</text>
<rect x="446" y="152" width="1" height="3" fill="#5c5c5c"/>
<rect x="456" y="148" width="1" height="7" fill="#5c5c5c"/>
<text x="456.5" y="141" font-size="9.6" text-anchor="middle" fill="#111">34</text>
<rect x="466" y="152" width="1" height="3" fill="#5c5c5c"/>
<rect x="476" y="148" width="1" height="7" fill="#5c5c5c"/>
<text x="476.5" y="141" font-size="9.6" text-anchor="middle" fill="#111">36</text>
<rect x="486" y="152" width="1" height="3" fill="#5c5c5c"/>
<rect x="496" y="148" width="1" height="7" fill="#5c5c5c"/>
<text x="496.5" y="141" font-size="9.6" text-anchor="middle" fill="#111">38</text>
<rect x="506" y="152" width="1" height="3" fill="#5c5c5c"/>
<rect x="516" y="148" width="1" height="7" fill="#5c5c5c"/>
<text x="516.5" y="141" font-size="9.6" text-anchor="middle" fill="#111">40</text>
<rect x="526" y="152" width="1" height="3" fill="#5c5c5c"/>
<rect x="536" y="148" width="1" height="7" fill="#5c5c5c"/>
<text x="536.5" y="141" font-size="9.6" text-anchor="middle" fill="#111">42</text>
<rect x="546" y="152" width="1" height="3" fill="#5c5c5c"/>
<rect x="556" y="148" width="1" height="7" fill="#5c5c5c"/>
<text x="556.5" y="141" font-size="9.6" text-anchor="middle" fill="#111">44</text>
<rect x="566" y="152" width="1" height="3" fill="#5c5c5c"/>
<rect x="576" y="148" width="1" height="7" fill="#5c5c5c"/>
<text x="576.5" y="141" font-size="9.6" text-anchor="middle" fill="#111">46</text>
<rect x="586" y="152" width="1" height="3" fill="#5c5c5c"/>
<rect x="596" y="148" width="1" height="7" fill="#5c5c5c"/>
<text x="596.5" y="141" font-size="9.6" text-anchor="middle" fill="#111">48</text>
<rect x="606" y="152" width="1" height="3" fill="#5c5c5c"/>
<rect x="616" y="148" width="1" height="7" fill="#5c5c5c"/>
<text x="616.5" y="141" font-size="9.6" text-anchor="middle" fill="#111">50</text>
<rect x="626" y="152" width="1" height="3" fill="#5c5c5c"/>
<rect x="636" y="148" width="1" height="7" fill="#5c5c5c"/>
<text x="636.5" y="141" font-size="9.6" text-anchor="middle" fill="#111">52</text>
<rect x="646" y="152" width="1" height="3" fill="#5c5c5c"/>
<rect x="656" y="148" width="1" height="7" fill="#5c5c5c"/>
<text x="656.5" y="141" font-size="9.6" text-anchor="middle" fill="#111">54</text>
<rect x="666" y="152" width="1" height="3" fill="#5c5c5c"/>
<rect x="676" y="148" width="1" height="7" fill="#5c5c5c"/>
<text x="676.5" y="141" font-size="9.6" text-anchor="middle" fill="#111">56</text>
<rect x="686" y="152" width="1" height="3" fill="#5c5c5c"/>
<rect x="696" y="148" width="1" height="7" fill="#5c5c5c"/>
<text x="696.5" y="141" font-size="9.6" text-anchor="middle" fill="#111">58</text>
<rect x="706" y="152" width="1" height="3" fill="#5c5c5c"/>
<rect x="716" y="148" width="1" height="7" fill="#5c5c5c"/>
<text x="716.5" y="141" font-size="9.6" text-anchor="middle" fill="#111">60</text>
<rect x="726" y="152" width="1" height="3" fill="#5c5c5c"/>
<rect x="736" y="148" width="1" height="7" fill="#5c5c5c"/>
<text x="736.5" y="141" font-size="9.6" text-anchor="middle" fill="#111">62</text>
<rect x="746" y="152" width="1" height="3" fill="#5c5c5c"/>
<rect x="756" y="148" width="1" height="7" fill="#5c5c5c"/>
<text x="756.5" y="141" font-size="9.6" text-anchor="middle" fill="#111">64</text>
<rect x="766" y="152" width="1" height="3" fill="#5c5c5c"/>
<rect x="776" y="148" width="1" height="7" fill="#5c5c5c"/>
<text x="776.5" y="141" font-size="9.6" text-anchor="middle" fill="#111">66</text>
<rect x="786" y="152" width="1" height="3" fill="#5c5c5c"/>
<rect x="796" y="148" width="1" height="7" fill="#5c5c5c"/>
<text x="796.5" y="141" font-size="9.6" text-anchor="middle" fill="#111">68</text>
<rect x="806" y="152" width="1" height="3" fill="#5c5c5c"/>
<rect x="816" y="148" width="1" height="7" fill="#5c5c5c"/>
<text x="816.5" y="141" font-size="9.6" text-anchor="middle" fill="#111">70</text>
<rect x="826" y="152" width="1" height="3" fill="#5c5c5c"/>
<rect x="836" y="148" width="1" height="7" fill="#5c5c5c"/>
<text x="836.5" y="141" font-size="9.6" text-anchor="middle" fill="#111">72</text>
<rect x="846" y="152" width="1" height="3" fill="#5c5c5c"/>
<rect x="856" y="148" width="1" height="7" fill="#5c5c5c"/>
<text x="856.5" y="141" font-size="9.6" text-anchor="middle" fill="#111">74</text>
<rect x="866" y="152" width="1" height="3" fill="#5c5c5c"/>
<rect x="876" y="148" width="1" height="7" fill="#5c5c5c"/>
<text x="876.5" y="141" font-size="9.6" text-anchor="middle" fill="#111">76</text>
<rect x="886" y="152" width="1" height="3" fill="#5c5c5c"/>
<rect x="896" y="148" width="1" height="7" fill="#5c5c5c"/>
<text x="896.5" y="141" font-size="9.6" text-anchor="middle" fill="#111">78</text>
<rect x="906" y="152" width="1" height="3" fill="#5c5c5c"/>
<rect x="916" y="148" width="1" height="7" fill="#5c5c5c"/>
<text x="916.5" y="141" font-size="9.6" text-anchor="middle" fill="#111">80</text>
<rect x="926" y="152" width="1" height="3" fill="#5c5c5c"/>
<rect x="936" y="148" width="1" height="7" fill="#5c5c5c"/>
<text x="936.5" y="141" font-size="9.6" text-anchor="middle" fill="#111">82</text>
<rect x="946" y="152" width="1" height="3" fill="#5c5c5c"/>
<rect x="956" y="148" width="1" height="7" fill="#5c5c5c"/>
<text x="956.5" y="141" font-size="9.6" text-anchor="middle" fill="#111">84</text>
<rect x="966" y="152" width="1" height="3" fill="#5c5c5c"/>
<rect x="976" y="148" width="1" height="7" fill="#5c5c5c"/>
<text x="976.5" y="141" font-size="9.6" text-anchor="middle" fill="#111">86</text>
<rect x="986" y="152" width="1" height="3" fill="#5c5c5c"/>
<rect x="996" y="148" width="1" height="7" fill="#5c5c5c"/>
<text x="996.5" y="141" font-size="9.6" text-anchor="middle" fill="#111">88</text>
<rect x="1006" y="152" width="1" height="3" fill="#5c5c5c"/>
<rect x="1016" y="148" width="1" height="7" fill="#5c5c5c"/>
<text x="1016.5" y="141" font-size="9.6" text-anchor="middle" fill="#111">90</text>
<rect x="1026" y="152" width="1" height="3" fill="#5c5c5c"/>
<rect x="1036" y="148" width="1" height="7" fill="#5c5c5c"/>
<text x="1036.5" y="141" font-size="9.6" text-anchor="middle" fill="#111">92</text>
<rect x="1046" y="152" width="1" height="3" fill="#5c5c5c"/>
<rect x="1056" y="148" width="1" height="7" fill="#5c5c5c"/>
<text x="1056.5" y="141" font-size="9.6" text-anchor="middle" fill="#111">94</text>
<rect x="1066" y="152" width="1" height="3" fill="#5c5c5c"/>
<rect x="1076" y="148" width="1" height="7" fill="#5c5c5c"/>
<text x="1076.5" y="141" font-size="9.6" text-anchor="middle" fill="#111">96</text>
<rect x="1086" y="152" width="1" height="3" fill="#5c5c5c"/>
<rect x="1096" y="148" width="1" height="7" fill="#5c5c5c"/>
<text x="1096.5" y="141" font-size="9.6" text-anchor="middle" fill="#111">98</text>
<rect x="1106" y="152" width="1" height="3" fill="#5c5c5c"/>
<rect x="1116" y="148" width="1" height="7" fill="#5c5c5c"/>
<text x="1116.5" y="141" font-size="9.6" text-anchor="middle" fill="#111">100</text>
<rect x="1126" y="152" width="1" height="3" fill="#5c5c5c"/>
<rect x="1136" y="148" width="1" height="7" fill="#5c5c5c"/>
<text x="1136.5" y="141" font-size="9.6" text-anchor="middle" fill="#111">102</text>
<text x="1156.5" y="141" font-size="9.6" text-anchor="middle" fill="#111">104</text>
</g></svg>
<svg class="ab" style="left:72px;top:155px" width="23" height="593" viewBox="72 155 23 593"><defs><clipPath id="vc2"><rect x="72" y="155" width="23" height="577"/></clipPath></defs><g clip-path="url(#vc2)">
<text transform="translate(80.5 153.5) rotate(-90)" font-size="9.6" text-anchor="middle" fill="#111">38</text>
<rect x="92" y="163" width="3" height="1" fill="#5c5c5c"/>
<rect x="88" y="173" width="7" height="1" fill="#5c5c5c"/>
<text transform="translate(80.5 173.5) rotate(-90)" font-size="9.6" text-anchor="middle" fill="#111">36</text>
<rect x="92" y="183" width="3" height="1" fill="#5c5c5c"/>
<rect x="88" y="193" width="7" height="1" fill="#5c5c5c"/>
<text transform="translate(80.5 193.5) rotate(-90)" font-size="9.6" text-anchor="middle" fill="#111">34</text>
<rect x="92" y="203" width="3" height="1" fill="#5c5c5c"/>
<rect x="88" y="213" width="7" height="1" fill="#5c5c5c"/>
<text transform="translate(80.5 213.5) rotate(-90)" font-size="9.6" text-anchor="middle" fill="#111">32</text>
<rect x="92" y="223" width="3" height="1" fill="#5c5c5c"/>
<rect x="88" y="233" width="7" height="1" fill="#5c5c5c"/>
<text transform="translate(80.5 233.5) rotate(-90)" font-size="9.6" text-anchor="middle" fill="#111">30</text>
<rect x="92" y="243" width="3" height="1" fill="#5c5c5c"/>
<rect x="88" y="253" width="7" height="1" fill="#5c5c5c"/>
<text transform="translate(80.5 253.5) rotate(-90)" font-size="9.6" text-anchor="middle" fill="#111">28</text>
<rect x="92" y="263" width="3" height="1" fill="#5c5c5c"/>
<rect x="88" y="273" width="7" height="1" fill="#5c5c5c"/>
<text transform="translate(80.5 273.5) rotate(-90)" font-size="9.6" text-anchor="middle" fill="#111">26</text>
<rect x="92" y="283" width="3" height="1" fill="#5c5c5c"/>
<rect x="88" y="293" width="7" height="1" fill="#5c5c5c"/>
<text transform="translate(80.5 293.5) rotate(-90)" font-size="9.6" text-anchor="middle" fill="#111">24</text>
<rect x="92" y="303" width="3" height="1" fill="#5c5c5c"/>
<rect x="88" y="313" width="7" height="1" fill="#5c5c5c"/>
<text transform="translate(80.5 313.5) rotate(-90)" font-size="9.6" text-anchor="middle" fill="#111">22</text>
<rect x="92" y="323" width="3" height="1" fill="#5c5c5c"/>
<rect x="88" y="333" width="7" height="1" fill="#5c5c5c"/>
<text transform="translate(80.5 333.5) rotate(-90)" font-size="9.6" text-anchor="middle" fill="#111">20</text>
<rect x="92" y="343" width="3" height="1" fill="#5c5c5c"/>
<rect x="88" y="353" width="7" height="1" fill="#5c5c5c"/>
<text transform="translate(80.5 353.5) rotate(-90)" font-size="9.6" text-anchor="middle" fill="#111">18</text>
<rect x="92" y="363" width="3" height="1" fill="#5c5c5c"/>
<rect x="88" y="373" width="7" height="1" fill="#5c5c5c"/>
<text transform="translate(80.5 373.5) rotate(-90)" font-size="9.6" text-anchor="middle" fill="#111">16</text>
<rect x="92" y="383" width="3" height="1" fill="#5c5c5c"/>
<rect x="88" y="393" width="7" height="1" fill="#5c5c5c"/>
<text transform="translate(80.5 393.5) rotate(-90)" font-size="9.6" text-anchor="middle" fill="#111">14</text>
<rect x="92" y="403" width="3" height="1" fill="#5c5c5c"/>
<rect x="88" y="413" width="7" height="1" fill="#5c5c5c"/>
<text transform="translate(80.5 413.5) rotate(-90)" font-size="9.6" text-anchor="middle" fill="#111">12</text>
<rect x="92" y="423" width="3" height="1" fill="#5c5c5c"/>
<rect x="88" y="433" width="7" height="1" fill="#5c5c5c"/>
<text transform="translate(80.5 433.5) rotate(-90)" font-size="9.6" text-anchor="middle" fill="#111">10</text>
<rect x="92" y="443" width="3" height="1" fill="#5c5c5c"/>
<rect x="88" y="453" width="7" height="1" fill="#5c5c5c"/>
<text transform="translate(80.5 453.5) rotate(-90)" font-size="9.6" text-anchor="middle" fill="#111">8</text>
<rect x="92" y="463" width="3" height="1" fill="#5c5c5c"/>
<rect x="88" y="473" width="7" height="1" fill="#5c5c5c"/>
<text transform="translate(80.5 473.5) rotate(-90)" font-size="9.6" text-anchor="middle" fill="#111">6</text>
<rect x="92" y="483" width="3" height="1" fill="#5c5c5c"/>
<rect x="88" y="493" width="7" height="1" fill="#5c5c5c"/>
<text transform="translate(80.5 493.5) rotate(-90)" font-size="9.6" text-anchor="middle" fill="#111">4</text>
<rect x="92" y="503" width="3" height="1" fill="#5c5c5c"/>
<rect x="88" y="513" width="7" height="1" fill="#5c5c5c"/>
<text transform="translate(80.5 513.5) rotate(-90)" font-size="9.6" text-anchor="middle" fill="#111">2</text>
<rect x="92" y="523" width="3" height="1" fill="#5c5c5c"/>
<rect x="88" y="533" width="7" height="1" fill="#5c5c5c"/>
<text transform="translate(80.5 533.5) rotate(-90)" font-size="9.6" text-anchor="middle" fill="#111">0</text>
<rect x="92" y="543" width="3" height="1" fill="#5c5c5c"/>
<rect x="88" y="553" width="7" height="1" fill="#5c5c5c"/>
<text transform="translate(80.5 553.5) rotate(-90)" font-size="9.6" text-anchor="middle" fill="#111">-2</text>
<rect x="92" y="563" width="3" height="1" fill="#5c5c5c"/>
<rect x="88" y="573" width="7" height="1" fill="#5c5c5c"/>
<text transform="translate(80.5 573.5) rotate(-90)" font-size="9.6" text-anchor="middle" fill="#111">-4</text>
<rect x="92" y="583" width="3" height="1" fill="#5c5c5c"/>
<rect x="88" y="593" width="7" height="1" fill="#5c5c5c"/>
<text transform="translate(80.5 593.5) rotate(-90)" font-size="9.6" text-anchor="middle" fill="#111">-6</text>
<rect x="92" y="603" width="3" height="1" fill="#5c5c5c"/>
<rect x="88" y="613" width="7" height="1" fill="#5c5c5c"/>
<text transform="translate(80.5 613.5) rotate(-90)" font-size="9.6" text-anchor="middle" fill="#111">-8</text>
<rect x="92" y="623" width="3" height="1" fill="#5c5c5c"/>
<rect x="88" y="633" width="7" height="1" fill="#5c5c5c"/>
<text transform="translate(80.5 633.5) rotate(-90)" font-size="9.6" text-anchor="middle" fill="#111">-10</text>
<rect x="92" y="643" width="3" height="1" fill="#5c5c5c"/>
<rect x="88" y="653" width="7" height="1" fill="#5c5c5c"/>
<text transform="translate(80.5 653.5) rotate(-90)" font-size="9.6" text-anchor="middle" fill="#111">-12</text>
<rect x="92" y="663" width="3" height="1" fill="#5c5c5c"/>
<rect x="88" y="673" width="7" height="1" fill="#5c5c5c"/>
<text transform="translate(80.5 673.5) rotate(-90)" font-size="9.6" text-anchor="middle" fill="#111">-14</text>
<rect x="92" y="683" width="3" height="1" fill="#5c5c5c"/>
<rect x="88" y="693" width="7" height="1" fill="#5c5c5c"/>
<text transform="translate(80.5 693.5) rotate(-90)" font-size="9.6" text-anchor="middle" fill="#111">-16</text>
<rect x="92" y="703" width="3" height="1" fill="#5c5c5c"/>
<rect x="88" y="713" width="7" height="1" fill="#5c5c5c"/>
<text transform="translate(80.5 713.5) rotate(-90)" font-size="9.6" text-anchor="middle" fill="#111">-18</text>
<rect x="92" y="723" width="3" height="1" fill="#5c5c5c"/>
<text transform="translate(80.5 733.5) rotate(-90)" font-size="9.6" text-anchor="middle" fill="#111">-20</text>
<text transform="translate(80.5 753.5) rotate(-90)" font-size="9.6" text-anchor="middle" fill="#111">-22</text>
</g></svg>
<svg class="ab" style="left:740px;top:143px" width="16" height="10" viewBox="740 143 16 10"><path d="M742.6 145 L754 145 L748.3 151 Z" fill="#000"/></svg>
<svg class="ab" style="left:83px;top:358px" width="10" height="16" viewBox="83 358 10 16"><path d="M85 360 L85 372 L91 366 Z" fill="#000"/></svg>
<div class="ab" style="left:582px;top:113px;font-size:12px;color:#1a1a1a;white-space:nowrap">* bond_washer.dxf</div>
<svg class="ab" style="left:76px;top:112px" width="14" height="14" viewBox="0 0 14 14"><path d="M2.5 2.5 L10.5 10.5 M10.5 2.5 L2.5 10.5" stroke="#6a6a6a" stroke-width="1.1"/></svg>
<svg class="ab" style="left:94px;top:111px" width="16" height="16" viewBox="0 0 16 16"><defs><linearGradient id="dg" x1="0" y1="0" x2="1" y2="1"><stop offset="0" stop-color="#7a90c8"/><stop offset="0.5" stop-color="#2a3f8a"/><stop offset="1" stop-color="#1a2f7a"/></linearGradient></defs><circle cx="8" cy="7.8" r="5.3" fill="#f6f6f6" stroke="url(#dg)" stroke-width="2.4"/><path d="M6.5 6 L9.5 9 M8 5.5 L8 10" stroke="#c8c8c8" stroke-width="0.6"/><path d="M5.5 9 L7.5 8" stroke="#e08080" stroke-width="0.6"/><path d="M8.3 7.8 L12.8 12.6" stroke="#f0b020" stroke-width="2"/><path d="M12.3 12.1 L13.7 13.6" stroke="#e06060" stroke-width="1.8"/></svg>
<div class="ab" style="left:1143px;top:283px;width:8px;height:320px;border-radius:4px;background:#7f7f7f"></div>
<div class="ab" style="left:1154px;top:108px;width:1px;height:690px;background:#bdbdbd"></div>
<div class="ab" style="left:281px;top:737px;width:633px;height:8px;border-radius:4px;background:#7f7f7f"></div>
<div class="ab" style="left:1099px;top:732px;width:55px;height:16px;background:#ebebeb"></div>
<div class="ab" style="left:1119px;top:734px;font-size:12.2px;color:#111;white-space:nowrap">1 &lt; 10</div>
<div class="ab" style="left:72px;top:748px;width:1082px;height:2px;background:#bfbfbf"></div>
<div class="ab" style="left:73px;top:750px;width:1081px;height:20px;background:#fff"></div>
<div class="ab" style="left:73px;top:770px;width:1081px;height:1px;background:#bdbdbd"></div>
<div class="ab" style="left:77px;top:750px;font-size:13.2px;color:#1010dd;white-space:nowrap"><i>Command:</i> preferences</div>
<div class="ab" style="left:73px;top:778px;font-size:13px;color:#111;white-space:nowrap">Command:</div>
<div class="ab" style="left:142px;top:776px;width:986px;height:18px;background:#fff"></div>
<div class="ab" style="left:1127px;top:772px;width:26px;height:25px;background:linear-gradient(#e4e4e4,#f4f4f4);border:1px solid #b4b4b4"></div>
<svg class="ab" style="left:1133px;top:779px" width="15" height="12" viewBox="0 0 15 12"><rect x="0.5" y="0.5" width="13.5" height="9.5" fill="#eee" stroke="#333" stroke-width="1"/><rect x="0" y="0" width="14.5" height="3" fill="#111"/></svg>
<div class="ab" style="left:72px;top:797px;width:1083px;height:1px;background:#c4c4c4"></div>
<div class="ab" style="left:1155px;top:108px;width:300px;height:690px;background:#fff"></div>
<div class="ab" style="left:1155px;top:108px;width:300px;height:23px;background:linear-gradient(#ececec,#dcdcdc);border-bottom:1px solid #c8c8c8"></div>
<div class="ab" style="left:1297px;top:112px;font-size:12px;color:#2a2a2a;white-space:nowrap">Layer List</div>
<svg class="ab" style="left:1156px;top:110px" width="34" height="16" viewBox="0 0 34 16"><circle cx="8" cy="8" r="7" fill="#6f6f6f"/><path d="M5.2 5.2 L10.8 10.8 M10.8 5.2 L5.2 10.8" stroke="#fff" stroke-width="1.8"/><circle cx="26" cy="8" r="7" fill="#6f6f6f"/><rect x="22.5" y="7.5" width="5.5" height="4" fill="none" stroke="#fff" stroke-width="1.1"/><path d="M24.5 7.5 L24.5 5.2 L30 5.2 L30 9.3 L28 9.3" fill="none" stroke="#fff" stroke-width="1.1"/></svg>
<div class="ab" style="left:1155px;top:131px;width:300px;height:26px;background:#a9a9a9"></div>
<div class="ab" style="left:1156px;top:132px;width:58px;height:23px;background:linear-gradient(#ececec,#f6f6f6)"></div>
<div class="ab" style="left:1216px;top:132px;width:58px;height:23px;background:linear-gradient(#ececec,#f6f6f6)"></div>
<div class="ab" style="left:1276px;top:132px;width:58px;height:23px;background:linear-gradient(#ececec,#f6f6f6)"></div>
<div class="ab" style="left:1336px;top:132px;width:58px;height:23px;background:linear-gradient(#ececec,#f6f6f6)"></div>
<div class="ab" style="left:1396px;top:132px;width:58px;height:23px;background:linear-gradient(#ececec,#f6f6f6)"></div>
<svg class="ab" style="left:1177px;top:138px" width="16" height="12" viewBox="0 0 16 12"><path d="M0.4 6.2 C2.5 0.2 13.5 0.2 15.6 6.2 C13.5 12 2.5 12 0.4 6.2 Z" fill="#000"/><ellipse cx="8" cy="6.6" rx="5.2" ry="3.6" fill="#fff"/><circle cx="8" cy="5.2" r="3.4" fill="#000"/><circle cx="6.9" cy="4.4" r="0.8" fill="#888"/></svg>
<svg class="ab" style="left:1237px;top:138px" width="16" height="12" viewBox="0 0 16 12"><path d="M0.4 6.2 C2.5 0.2 13.5 0.2 15.6 6.2 C13.5 12 2.5 12 0.4 6.2 Z" fill="#aaaaaa"/><ellipse cx="8" cy="6.6" rx="5.2" ry="3.6" fill="#fff"/><circle cx="8" cy="5.2" r="3.4" fill="#aaaaaa"/><circle cx="6.9" cy="4.4" r="0.8" fill="#888"/></svg>
<svg class="ab" style="left:1297px;top:135px" width="16" height="16" viewBox="0 0 16 16"><path d="M8 1.5 V14.5 M1.5 8 H14.5" stroke="#e00000" stroke-width="3.2"/><path d="M8 1.5 V14.5 M1.5 8 H14.5" stroke="#b00000" stroke-width="0.5" opacity="0.4"/></svg>
<svg class="ab" style="left:1356px;top:135px" width="16" height="16" viewBox="0 0 16 16"><rect x="1.5" y="6.5" width="13" height="3.2" fill="#e00000"/></svg>
<svg class="ab" style="left:1417px;top:135px" width="17" height="17" viewBox="0 0 17 17"><path d="M2 15 L3.2 11.2 L12.2 2.2 L14.8 4.8 L5.8 13.8 Z" fill="#e8b040" stroke="#7a5a20" stroke-width="0.7"/><path d="M12.2 2.2 L14.8 4.8 L15.6 4 C16 3.4 15.2 2 14 1.4 C13.4 1.1 13 1.4 12.2 2.2Z" fill="#e03030"/><path d="M2 15 L3.2 11.2 L5.8 13.8 Z" fill="#f0d8a8"/><path d="M2 15 L2.6 13.2 L3.8 14.4 Z" fill="#333"/></svg>
<div class="ab" style="left:1161px;top:163px;width:16px;height:9px;background:#fff;border:1px solid #000"></div>
<div class="ab" style="left:1183px;top:160px;font-size:13.2px;color:#111;white-space:nowrap">0</div>
<svg class="ab" style="left:1415px;top:161px" width="16" height="12" viewBox="0 0 16 12"><path d="M0.4 6.2 C2.5 0.2 13.5 0.2 15.6 6.2 C13.5 12 2.5 12 0.4 6.2 Z" fill="#000"/><ellipse cx="8" cy="6.6" rx="5.2" ry="3.6" fill="#fff"/><circle cx="8" cy="5.2" r="3.4" fill="#000"/><circle cx="6.9" cy="4.4" r="0.8" fill="#888"/></svg>
<svg class="ab" style="left:1440px;top:160px" width="10" height="14" viewBox="0 0 10 14"><path d="M2.4 7.5 V4.6 C2.4 2.3 3.7 1 5 1 C6.3 1 7.6 2.3 7.6 4.6 V7.5" fill="none" stroke="#b4b4b4" stroke-width="1.7"/><rect x="0" y="6.5" width="10" height="7.3" fill="#b4b4b4"/></svg>
<div class="ab" style="left:1161px;top:183px;width:16px;height:9px;background:#ff0000;border:1px solid #000"></div>
<div class="ab" style="left:1183px;top:180px;font-size:13.2px;color:#111;white-space:nowrap">Center</div>
<svg class="ab" style="left:1415px;top:181px" width="16" height="12" viewBox="0 0 16 12"><path d="M0.4 6.2 C2.5 0.2 13.5 0.2 15.6 6.2 C13.5 12 2.5 12 0.4 6.2 Z" fill="#000"/><ellipse cx="8" cy="6.6" rx="5.2" ry="3.6" fill="#fff"/><circle cx="8" cy="5.2" r="3.4" fill="#000"/><circle cx="6.9" cy="4.4" r="0.8" fill="#888"/></svg>
<svg class="ab" style="left:1440px;top:180px" width="10" height="14" viewBox="0 0 10 14"><path d="M2.4 7.5 V4.6 C2.4 2.3 3.7 1 5 1 C6.3 1 7.6 2.3 7.6 4.6 V7.5" fill="none" stroke="#b4b4b4" stroke-width="1.7"/><rect x="0" y="6.5" width="10" height="7.3" fill="#b4b4b4"/></svg>
<div class="ab" style="left:1161px;top:203px;width:16px;height:9px;background:#000;border:1px solid #000"></div>
<div class="ab" style="left:1183px;top:200px;font-size:13.2px;color:#111;white-space:nowrap">Hidden</div>
<svg class="ab" style="left:1415px;top:201px" width="16" height="12" viewBox="0 0 16 12"><path d="M0.4 6.2 C2.5 0.2 13.5 0.2 15.6 6.2 C13.5 12 2.5 12 0.4 6.2 Z" fill="#000"/><ellipse cx="8" cy="6.6" rx="5.2" ry="3.6" fill="#fff"/><circle cx="8" cy="5.2" r="3.4" fill="#000"/><circle cx="6.9" cy="4.4" r="0.8" fill="#888"/></svg>
<svg class="ab" style="left:1440px;top:200px" width="10" height="14" viewBox="0 0 10 14"><path d="M2.4 7.5 V4.6 C2.4 2.3 3.7 1 5 1 C6.3 1 7.6 2.3 7.6 4.6 V7.5" fill="none" stroke="#b4b4b4" stroke-width="1.7"/><rect x="0" y="6.5" width="10" height="7.3" fill="#b4b4b4"/></svg>
<div class="ab" style="left:1161px;top:223px;width:16px;height:9px;background:#fff;border:1px solid #000"></div>
<div class="ab" style="left:1183px;top:220px;font-size:13.2px;color:#111;white-space:nowrap">Visible</div>
<svg class="ab" style="left:1415px;top:221px" width="16" height="12" viewBox="0 0 16 12"><path d="M0.4 6.2 C2.5 0.2 13.5 0.2 15.6 6.2 C13.5 12 2.5 12 0.4 6.2 Z" fill="#000"/><ellipse cx="8" cy="6.6" rx="5.2" ry="3.6" fill="#fff"/><circle cx="8" cy="5.2" r="3.4" fill="#000"/><circle cx="6.9" cy="4.4" r="0.8" fill="#888"/></svg>
<svg class="ab" style="left:1440px;top:220px" width="10" height="14" viewBox="0 0 10 14"><path d="M2.4 7.5 V4.6 C2.4 2.3 3.7 1 5 1 C6.3 1 7.6 2.3 7.6 4.6 V7.5" fill="none" stroke="#b4b4b4" stroke-width="1.7"/><rect x="0" y="6.5" width="10" height="7.3" fill="#b4b4b4"/></svg>
<svg class="ab" style="left:1394px;top:219px" width="16" height="16" viewBox="0 0 17 17"><path d="M2 15 L3.2 11.2 L12.2 2.2 L14.8 4.8 L5.8 13.8 Z" fill="#e8b040" stroke="#7a5a20" stroke-width="0.7"/><path d="M12.2 2.2 L14.8 4.8 L15.6 4 C16 3.4 15.2 2 14 1.4 C13.4 1.1 13 1.4 12.2 2.2Z" fill="#e03030"/><path d="M2 15 L3.2 11.2 L5.8 13.8 Z" fill="#f0d8a8"/><path d="M2 15 L2.6 13.2 L3.8 14.4 Z" fill="#333"/></svg>
<div class="ab" style="left:1155px;top:157px;width:1px;height:641px;background:#c9c9c9"></div><div class="ab" style="left:1454px;top:131px;width:1px;height:667px;background:#c9c9c9"></div>
<div class="ab" style="left:1455px;top:108px;width:45px;height:690px;background:linear-gradient(90deg,#c6c6c6 0px,#efefef 2px,#e6e6e6 22px,#cfcfcf 41px,#b9b9b9 45px)"></div>
<div class="ab" style="left:1463px;top:116px;width:2px;height:2px;background:#8e8e8e"></div><div class="ab" style="left:1469px;top:116px;width:2px;height:2px;background:#8e8e8e"></div><div class="ab" style="left:1475px;top:116px;width:2px;height:2px;background:#8e8e8e"></div><div class="ab" style="left:1481px;top:116px;width:2px;height:2px;background:#8e8e8e"></div><div class="ab" style="left:1487px;top:116px;width:2px;height:2px;background:#8e8e8e"></div>
<div class="ab" style="left:1456px;top:120px;width:43px;height:43px;border-radius:7px;background:#b7b7b7"></div>
<div class="ab" style="left:1456px;top:417px;width:43px;height:43px;border-radius:7px;background:#b7b7b7"></div>
<div class="ab" style="left:1457px;top:261px;width:2px;height:2px;background:#8e8e8e"></div><div class="ab" style="left:1461px;top:261px;width:2px;height:2px;background:#8e8e8e"></div><div class="ab" style="left:1465px;top:261px;width:2px;height:2px;background:#8e8e8e"></div><div class="ab" style="left:1469px;top:261px;width:2px;height:2px;background:#8e8e8e"></div><div class="ab" style="left:1473px;top:261px;width:2px;height:2px;background:#8e8e8e"></div><div class="ab" style="left:1477px;top:261px;width:2px;height:2px;background:#8e8e8e"></div><div class="ab" style="left:1481px;top:261px;width:2px;height:2px;background:#8e8e8e"></div><div class="ab" style="left:1485px;top:261px;width:2px;height:2px;background:#8e8e8e"></div><div class="ab" style="left:1489px;top:261px;width:2px;height:2px;background:#8e8e8e"></div><div class="ab" style="left:1493px;top:261px;width:2px;height:2px;background:#8e8e8e"></div><div class="ab" style="left:1497px;top:261px;width:2px;height:2px;background:#8e8e8e"></div>
<div class="ab" style="left:1457px;top:409px;width:2px;height:2px;background:#8e8e8e"></div><div class="ab" style="left:1461px;top:409px;width:2px;height:2px;background:#8e8e8e"></div><div class="ab" style="left:1465px;top:409px;width:2px;height:2px;background:#8e8e8e"></div><div class="ab" style="left:1469px;top:409px;width:2px;height:2px;background:#8e8e8e"></div><div class="ab" style="left:1473px;top:409px;width:2px;height:2px;background:#8e8e8e"></div><div class="ab" style="left:1477px;top:409px;width:2px;height:2px;background:#8e8e8e"></div><div class="ab" style="left:1481px;top:409px;width:2px;height:2px;background:#8e8e8e"></div><div class="ab" style="left:1485px;top:409px;width:2px;height:2px;background:#8e8e8e"></div><div class="ab" style="left:1489px;top:409px;width:2px;height:2px;background:#8e8e8e"></div><div class="ab" style="left:1493px;top:409px;width:2px;height:2px;background:#8e8e8e"></div><div class="ab" style="left:1497px;top:409px;width:2px;height:2px;background:#8e8e8e"></div>
<svg class="ab" style="left:1463px;top:127px" width="28" height="28" viewBox="0 0 28 28"><rect x="0.5" y="0.5" width="27" height="27" fill="#fff" stroke="#222" stroke-width="1"/><rect x="0" y="0" width="28" height="5" fill="#000"/><rect x="1.5" y="1.2" width="2.8" height="2.8" fill="#fff"/><path d="M8 13 L14 10 L14 21 L8 24Z" fill="#8a8a8a" stroke="#444" stroke-width="0.6"/><path d="M11 12 L18 9 L18 20 L11 23Z" fill="#bdbdbd" stroke="#555" stroke-width="0.6"/><path d="M14 11 L21 8 L21 19 L14 22Z" fill="#f4f4f4" stroke="#666" stroke-width="0.6"/><path d="M16 19 L19 12 L20 18Z" fill="none" stroke="#e03030" stroke-width="0.9"/></svg>
<svg class="ab" style="left:1463px;top:174px" width="28" height="28" viewBox="0 0 28 28"><rect x="0.5" y="0.5" width="27" height="27" fill="#fff" stroke="#222" stroke-width="1"/><rect x="0" y="0" width="28" height="5" fill="#000"/><rect x="1.5" y="1.2" width="2.8" height="2.8" fill="#fff"/><rect x="7" y="10" width="11" height="8" fill="#f6eab8" stroke="#555" stroke-width="0.8"/><circle cx="17.5" cy="18" r="5" fill="#f6eab8" fill-opacity="0.85" stroke="#555" stroke-width="0.8"/></svg>
<svg class="ab" style="left:1463px;top:220px" width="28" height="28" viewBox="0 0 28 28"><rect x="0.5" y="0.5" width="27" height="27" fill="#fff" stroke="#222" stroke-width="1"/><rect x="0" y="0" width="28" height="5" fill="#000"/><rect x="1.5" y="1.2" width="2.8" height="2.8" fill="#fff"/><rect x="5.5" y="9" width="17" height="13" rx="2.5" fill="#f6f7f9" stroke="#b7c7e0" stroke-width="1"/></svg>
<svg class="ab" style="left:1463px;top:276px" width="28" height="28" viewBox="0 0 28 28"><rect x="0.5" y="0.5" width="27" height="27" fill="#fff" stroke="#222" stroke-width="1"/><rect x="0" y="0" width="28" height="5" fill="#000"/><rect x="1.5" y="1.2" width="2.8" height="2.8" fill="#fff"/><rect x="4" y="9" width="4" height="3" fill="#000"/><rect x="4" y="14" width="4" height="3" fill="#000"/><rect x="4" y="19.5" width="4" height="3" fill="#000"/><rect x="10.5" y="9" width="14" height="3" fill="none" stroke="#333" stroke-width="0.8"/><rect x="10.5" y="14" width="14" height="3" fill="none" stroke="#333" stroke-width="0.8"/><rect x="10.5" y="19.5" width="14" height="3" fill="none" stroke="#333" stroke-width="0.8"/></svg>
<svg class="ab" style="left:1463px;top:322px" width="28" height="28" viewBox="0 0 28 28"><rect x="0.5" y="0.5" width="27" height="27" fill="#fff" stroke="#222" stroke-width="1"/><rect x="0" y="0" width="28" height="5" fill="#000"/><rect x="1.5" y="1.2" width="2.8" height="2.8" fill="#fff"/><path d="M6.5 10 L21.5 10 L15 17 L15 24 L13 22.5 L13 17 Z" fill="#9a9a9a" stroke="#555" stroke-width="0.6"/><ellipse cx="14" cy="10.3" rx="7.5" ry="1.6" fill="#6e6e6e"/></svg>
<svg class="ab" style="left:1463px;top:368px" width="28" height="28" viewBox="0 0 28 28"><rect x="0.5" y="0.5" width="27" height="27" fill="#fff" stroke="#222" stroke-width="1"/><rect x="0" y="0" width="28" height="5" fill="#000"/><rect x="1.5" y="1.2" width="2.8" height="2.8" fill="#fff"/><path d="M6 10 L11 13 L11 19 L6 22Z" fill="#f2f2f2" stroke="#555" stroke-width="0.8"/><rect x="11" y="13" width="11" height="6" fill="#b9b9b9" stroke="#666" stroke-width="0.6"/><path d="M3 16 H25" stroke="#f08a8a" stroke-width="0.8" stroke-dasharray="2 1.5"/></svg>
<svg class="ab" style="left:1463px;top:424px" width="28" height="28" viewBox="0 0 28 28"><rect x="0.5" y="0.5" width="27" height="27" fill="#fff" stroke="#222" stroke-width="1"/><rect x="0" y="0" width="28" height="5" fill="#000"/><rect x="1.5" y="1.2" width="2.8" height="2.8" fill="#fff"/><path d="M3 9.5 H15 M3 12.5 H13 M3 15.5 H19 M3 18.5 H19" stroke="#c0c0c0" stroke-width="1"/><rect x="0.5" y="22" width="27" height="5.5" fill="#fff" stroke="#333" stroke-width="0.8"/><path d="M10 25 H24" stroke="#777" stroke-width="1"/><path d="M3 25 L5 24 M3 25 L5 26" stroke="#555" stroke-width="0.6"/></svg>
<svg class="ab" style="left:1463px;top:471px" width="28" height="28" viewBox="0 0 28 28"><rect x="0.5" y="0.5" width="27" height="27" fill="#fff" stroke="#222" stroke-width="1"/><rect x="0" y="0" width="28" height="5" fill="#000"/><rect x="1.5" y="1.2" width="2.8" height="2.8" fill="#fff"/><rect x="7" y="9" width="13" height="15" rx="1" fill="#c88a30"/><rect x="8.8" y="10.8" width="9.4" height="11.5" fill="#f2f2f2"/><rect x="10.5" y="7.5" width="6" height="3" rx="1" fill="#9a9a9a"/><path d="M10 14 H17 M10 16 H17 M10 18 H15" stroke="#ccc" stroke-width="0.8"/><path d="M15 22 L18 19 L18 22Z" fill="#aaa"/></svg>
<div class="ab" style="left:0;top:798px;width:1500px;height:46px;background:#dcdcdc"></div>
<div class="ab" style="left:2px;top:807px;font-size:10px;color:#111;white-space:nowrap">63.1422,16.7454</div>
<div class="ab" style="left:2px;top:827px;font-size:10px;color:#111;white-space:nowrap">@55.1422,6.7454</div>
<div class="ab" style="left:253px;top:802px;width:1px;height:40px;background:#8a8a8a"></div>
<div class="ab" style="left:256px;top:807px;font-size:10px;color:#111;white-space:nowrap">65.3249&lt;15°</div>
<div class="ab" style="left:256px;top:827px;font-size:10px;color:#111;white-space:nowrap">@55.5532&lt;7°</div>
<div class="ab" style="left:506px;top:819px;width:6px;height:6px;border-radius:3px;background:#c4c4c4"></div>
<div class="ab" style="left:500px;top:812px;width:198px;text-align:right;font-size:10.4px;line-height:11px;color:#111;white-space:nowrap">Select entity or region<br>Move entity or reference</div>
<svg class="ab" style="left:716px;top:805px" width="20" height="32" viewBox="0 0 20 32"><rect x="1.5" y="1.5" width="17" height="29" rx="8.5" fill="#fff" stroke="#333" stroke-width="1"/><path d="M1.5 14 L18.5 14 M10 1.5 L10 14" stroke="#333" stroke-width="1"/><rect x="8" y="4" width="4" height="8" rx="2" fill="#fff" stroke="#333" stroke-width="0.9"/></svg>
<div class="ab" style="left:940px;top:819px;width:6px;height:6px;border-radius:3px;background:#c4c4c4"></div>
<div class="ab" style="left:949px;top:811px;font-size:10.2px;line-height:11px;color:#111;white-space:nowrap">Selected entities:<br>3 Entities on 2 Layers.</div>
<div class="ab" style="left:1269px;top:819px;width:6px;height:6px;border-radius:3px;background:#c4c4c4"></div>
</body></html>
